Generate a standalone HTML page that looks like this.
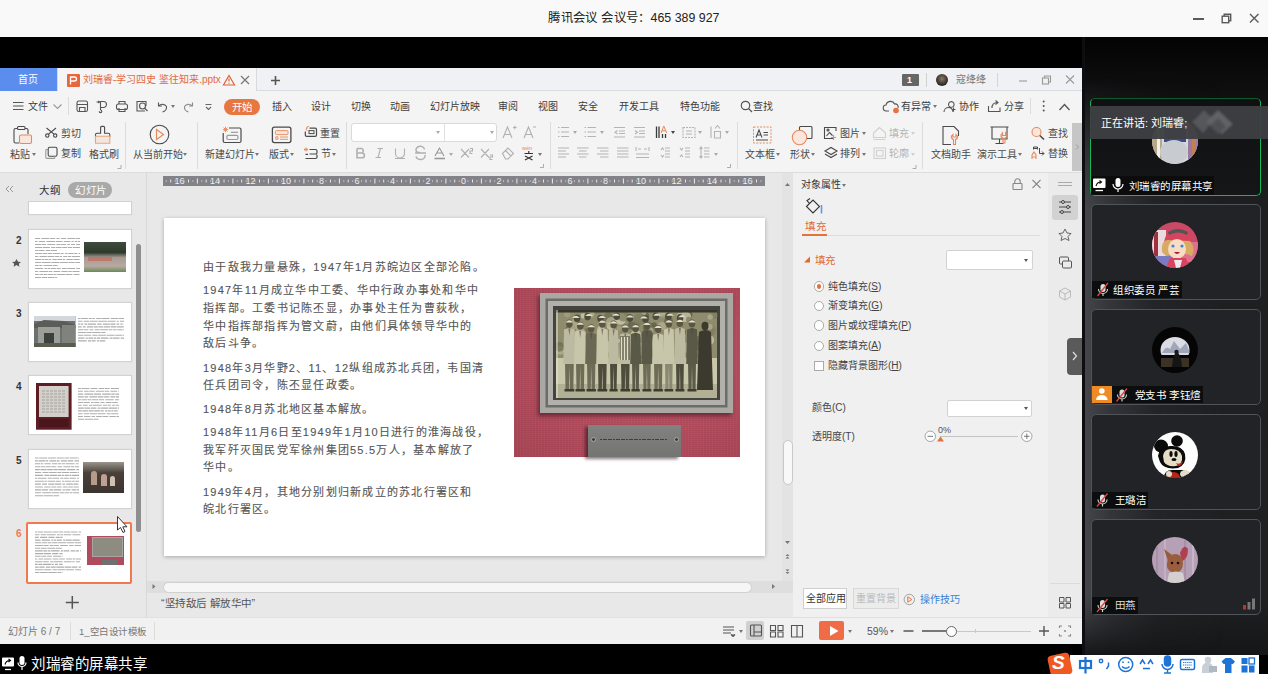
<!DOCTYPE html>
<html lang="zh-CN"><head><meta charset="utf-8">
<style>
*{margin:0;padding:0;box-sizing:border-box}
html,body{width:1268px;height:674px;overflow:hidden;background:#000;font-family:"Liberation Sans",sans-serif;position:relative}
.a{position:absolute}
.t{position:absolute;white-space:nowrap;line-height:1}
svg{position:absolute;overflow:visible}
.mn{font-size:10px;color:#3c3c3c;top:101.5px}
.rb{font-size:10px;color:#484848}
.dis{color:#b4b4b4}
.sep{position:absolute;width:1px;background:#dcdcdc}
.sl i{width:calc(1em + 1.25px);text-align:left}
.ar{position:absolute;width:0;height:0;border-left:2.5px solid transparent;border-right:2.5px solid transparent;border-top:3px solid #777}
i{font-style:normal;display:inline-block;width:1em;text-align:center}
.nf i{-webkit-text-stroke:.45px currentColor;font-size:1.25em;width:.8em;line-height:.8}
.nf .sl i{width:calc(.8em + 1.25px)}
</style></head><body>
<!-- title bar -->
<div class="a" style="left:0;top:0;width:1268px;height:37px;background:#f9f9f9"></div>
<div class="t" style="left:548px;top:12px;font-size:12.4px;color:#222"><i>腾</i><i>讯</i><i>会</i><i>议</i> <i>会</i><i>议</i><i>号</i><i>：</i>465 389 927</div>
<div class="a" style="left:1193px;top:18px;width:11px;height:1.5px;background:#5a5a5a"></div>
<svg style="left:0;top:0" width="1268" height="37"><g fill="none" stroke="#5a5a5a" stroke-width="1.4">
<rect x="1222.2" y="16.2" width="6.5" height="6.5"/><path d="M1224.2 16.2V14.2H1230.7V20.7H1228.7"/>
<path d="M1250 14L1258.5 22.5M1258.5 14L1250 22.5"/></g></svg>

<!-- video panel -->
<div class="a" style="left:1082px;top:37px;width:186px;height:618px;background:linear-gradient(#030303 0,#0c0c0d 40px,#151617 90px,#1e1f21 170px,#1f2022 560px,#151617 618px)"></div>
<div class="a" style="left:1085px;top:37px;width:183px;height:618px;background:linear-gradient(to right,rgba(80,83,88,.75) 0,rgba(70,72,77,.55) 25px,rgba(50,52,56,.25) 70px,rgba(30,31,33,0) 140px);-webkit-mask-image:linear-gradient(transparent 40px,#000 170px,#000 560px,transparent 618px)"></div>
<div class="a" style="left:1082px;top:37px;width:3px;height:618px;background:#0e0e10"></div>

<div class="a" style="left:1090px;top:98px;width:171px;height:98px;border:1.5px solid #18b457;border-top-color:#0d5a2a;border-radius:5px;background:linear-gradient(#0f1011,#151618)"></div>
<svg style="left:1152.3px;top:117.5px" width="46" height="46"><defs><clipPath id="c1"><circle cx="23" cy="23" r="23"/></clipPath></defs><g clip-path="url(#c1)"><rect width="46" height="46" fill="#d8d8dc"/><rect x="0" y="0" width="10" height="46" fill="#b8a888"/><rect x="36" y="0" width="10" height="46" fill="#9a7aa0"/><rect x="40" y="20" width="4" height="26" fill="#c08050"/><rect x="12" y="10" width="22" height="14" fill="#3a4a8a"/><ellipse cx="22" cy="34" rx="14" ry="12" fill="#c8ccd0"/><rect x="5" y="5" width="3" height="40" fill="#f0f0ea"/></g></svg>
<div class="a" style="left:1089.5px;top:105.7px;width:178.5px;height:33.3px;background:rgba(62,64,68,.96)"></div>
<div class="t" style="left:1101px;top:118px;font-size:11px;color:#fff"><i>正</i><i>在</i><i>讲</i><i>话</i>: <i>刘</i><i>瑞</i><i>睿</i>;</div>
<svg style="left:0;top:0" width="1" height="1"><g filter="blur(0.8px)"><path d="M1192 122L1204 110L1214 120L1203 133Z" fill="#55575b"/><path d="M1206 122L1218 110L1233 124L1222 134Z" fill="#606266"/><path d="M1210 126L1218 118L1226 127L1218 134Z" fill="#4e5054"/></g></svg>
<div class="a" style="left:1091px;top:176px;width:122.8px;height:18.6px;background:rgba(10,10,11,.8)"></div>
<svg style="left:0;top:0" width="1" height="1"><rect x="1093" y="178.5" width="12.5" height="9.5" rx="1" fill="#fff"/><path d="M1095.5 190.5H1103" stroke="#fff" stroke-width="1.3"/><path d="M1096 186Q1097 182 1101 182M1099.5 180.5L1101.5 182L1099.5 183.5" fill="none" stroke="#111" stroke-width="1.1"/>
<rect x="1115.5" y="178" width="5" height="9" rx="2.5" fill="#fff"/><path d="M1113 184A5 5 0 0 0 1123 184M1118 189V192" fill="none" stroke="#fff" stroke-width="1.2"/></svg>
<div class="t" style="left:1128.5px;top:180.5px;font-size:10.5px;color:#fff"><i>刘</i><i>瑞</i><i>睿</i><i>的</i><i>屏</i><i>幕</i><i>共</i><i>享</i></div>
<div class="a" style="left:1090.5px;top:203.5px;width:170px;height:96.5px;border:1px solid #505357;border-radius:5px;background:#222326"></div>
<svg style="left:1152.3px;top:222.0px" width="46" height="46"><defs><clipPath id="c2"><circle cx="23" cy="23" r="23"/></clipPath></defs><g clip-path="url(#c2)"><rect width="46" height="46" fill="#c84a66"/><rect x="0" y="8" width="14" height="26" fill="#e8dcdc"/><rect x="2" y="10" width="4" height="24" fill="#a03040"/><rect x="0" y="34" width="20" height="12" fill="#7a7ac0"/><rect x="30" y="20" width="16" height="20" fill="#e07090"/><path d="M12 20Q14 8 26 6Q40 6 40 18L38 20Z" fill="#d8445e"/><path d="M16 10Q26 4 36 10L35 13Q26 8 17 13Z" fill="#555"/><path d="M10 30Q9 18 16 18L38 19Q44 26 40 34L34 32L14 34Z" fill="#d8aa64"/><ellipse cx="25" cy="27" rx="9" ry="10" fill="#f8dcc4"/><circle cx="21" cy="24" r="1.6" fill="#3a8ad8"/><circle cx="30" cy="24" r="1.6" fill="#3a8ad8"/><path d="M22 30Q25 34 28 30Z" fill="#a02030"/><path d="M14 46L18 36H34L38 46Z" fill="#d8445e"/><path d="M22 38H30L28 46H24Z" fill="#f0e8f0"/></g></svg>
<div class="a" style="left:1091.5px;top:281px;width:90px;height:16.5px;background:rgba(8,8,9,.8)"></div><svg style="left:0;top:0" width="1" height="1"><rect x="1100.5" y="284" width="5" height="8" rx="2.5" fill="#ddd"/><path d="M1098.5 289A4.5 4.5 0 0 0 1107.5 289M1103.0 293.5V296" fill="none" stroke="#ddd" stroke-width="1.1"/><path d="M1108.0 283L1097.5 296" stroke="#e0443a" stroke-width="1.3"/></svg>
<div class="t" style="left:1113px;top:284.5px;font-size:10.5px;color:#fff"><i>组</i><i>织</i><i>委</i><i>员</i> <i>严</i><i>芸</i></div>
<div class="a" style="left:1090.5px;top:308.5px;width:170px;height:96px;border:1px solid #505357;border-radius:5px;background:#222326"></div>
<svg style="left:1152.3px;top:326.5px" width="46" height="46"><defs><clipPath id="c3"><circle cx="23" cy="23" r="23"/></clipPath></defs><g clip-path="url(#c3)"><rect width="46" height="46" fill="#050505"/><ellipse cx="23" cy="23" rx="14.5" ry="13" fill="#dcdde4"/><path d="M10 26Q14 18 18 22L22 14L28 22L34 16L38 26Z" fill="#8890a8" opacity=".7"/><rect x="8" y="28" width="30" height="18" fill="#050505"/><rect x="9" y="31" width="28" height="9" fill="#3a3224"/><path d="M20 40Q21 26 25 25Q29 27 30 40Z" fill="#151515"/><circle cx="24.5" cy="25" r="2.2" fill="#1a1a1a"/></g></svg>
<div class="a" style="left:1092px;top:386px;width:111px;height:16.6px;background:rgba(8,8,9,.8)"></div>
<div class="a" style="left:1092px;top:386px;width:19.6px;height:16.6px;background:#f08a24"></div>
<svg style="left:0;top:0" width="1" height="1"><circle cx="1101.8" cy="391" r="2.8" fill="#fff"/><path d="M1096 400A5.8 5 0 0 1 1107.6 400Z" fill="#fff"/></svg><svg style="left:0;top:0" width="1" height="1"><rect x="1119.5" y="389.5" width="5" height="8" rx="2.5" fill="#ddd"/><path d="M1117.5 394.5A4.5 4.5 0 0 0 1126.5 394.5M1122.0 399.0V401.5" fill="none" stroke="#ddd" stroke-width="1.1"/><path d="M1127.0 388.5L1116.5 401.5" stroke="#e0443a" stroke-width="1.3"/></svg>
<div class="t" style="left:1134.4px;top:390px;font-size:10.5px;color:#fff"><i>党</i><i>支</i><i>书</i> <i>李</i><i>钰</i><i>煊</i></div>
<div class="a" style="left:1090.5px;top:413.5px;width:170px;height:96px;border:1px solid #505357;border-radius:5px;background:#222326"></div>
<svg style="left:1152.3px;top:431.5px" width="46" height="46"><defs><clipPath id="c4"><circle cx="23" cy="23" r="23"/></clipPath></defs><g clip-path="url(#c4)"><rect width="46" height="46" fill="#fdfdfd"/><ellipse cx="9" cy="14" rx="7" ry="6.5" fill="#0a0a0a"/><circle cx="25" cy="9" r="5.8" fill="#0a0a0a"/><path d="M6 24Q8 14 18 14Q30 13 33 22Q35 32 26 36Q12 38 8 30Z" fill="#0a0a0a"/><path d="M11 24Q12 17 19 17Q28 17 30 24Q31 32 24 34Q15 35 12 30Z" fill="#e4dcc4"/><ellipse cx="19" cy="22" rx="1.6" ry="3" fill="#0a0a0a"/><ellipse cx="24" cy="22" rx="1.6" ry="3" fill="#0a0a0a"/><ellipse cx="22" cy="27.5" rx="2.5" ry="1.6" fill="#0a0a0a"/><path d="M24 31Q28 33 31 29Q30 34 26 34Z" fill="#c03028"/><path d="M12 46Q12 38 20 38H32Q37 40 37 46Z" fill="#0a0a0a"/><path d="M14 46Q15 40 22 40Q28 41 28 46Z" fill="#b82418"/><ellipse cx="33" cy="42" rx="5" ry="4" fill="#e4dcc4"/><ellipse cx="17" cy="42" rx="3" ry="3" fill="#e4dcc4"/></g></svg>
<div class="a" style="left:1092px;top:491.5px;width:56px;height:16.5px;background:rgba(8,8,9,.8)"></div><svg style="left:0;top:0" width="1" height="1"><rect x="1100" y="494.5" width="5" height="8" rx="2.5" fill="#ddd"/><path d="M1098 499.5A4.5 4.5 0 0 0 1107 499.5M1102.5 504.0V506.5" fill="none" stroke="#ddd" stroke-width="1.1"/><path d="M1107.5 493.5L1097 506.5" stroke="#e0443a" stroke-width="1.3"/></svg>
<div class="t" style="left:1114.4px;top:494.5px;font-size:10.5px;color:#fff"><i>王</i><i>璐</i><i>洁</i></div>
<div class="a" style="left:1090.5px;top:519px;width:170px;height:96px;border:1px solid #505357;border-radius:5px;background:#222326"></div>
<svg style="left:1152.3px;top:536.7px" width="46" height="46"><defs><clipPath id="c5"><circle cx="23" cy="23" r="23"/></clipPath></defs><g clip-path="url(#c5)"><rect width="46" height="46" fill="#b6a0b6"/><rect x="4" y="0" width="2" height="46" fill="#a890a8"/><rect x="12" y="0" width="2" height="46" fill="#c4b0c4"/><rect x="32" y="0" width="2" height="46" fill="#a890a8"/><rect x="40" y="0" width="2" height="46" fill="#c8b4c8"/><path d="M12 12L20 18L16 24Z" fill="#9a5a3a"/><path d="M28 16Q32 6 36 12Q36 22 30 24Z" fill="#b04050"/><path d="M15 26Q16 17 24 17Q31 18 31 26Q31 34 24 36Q16 35 15 30Z" fill="#9a5e3e"/><circle cx="20" cy="26" r="1.3" fill="#111"/><circle cx="26" cy="26" r="1.3" fill="#111"/><path d="M15 46L17 36Q24 33 31 36L33 46Z" fill="#d4d0d0"/></g></svg>
<div class="a" style="left:1092px;top:597px;width:46px;height:16.5px;background:rgba(8,8,9,.8)"></div><svg style="left:0;top:0" width="1" height="1"><rect x="1100" y="600" width="5" height="8" rx="2.5" fill="#ddd"/><path d="M1098 605A4.5 4.5 0 0 0 1107 605M1102.5 609.5V612" fill="none" stroke="#ddd" stroke-width="1.1"/><path d="M1107.5 599L1097 612" stroke="#e0443a" stroke-width="1.3"/></svg>
<div class="t" style="left:1114.4px;top:600px;font-size:10.5px;color:#ddd"><i>田</i><i>燕</i></div>
<svg style="left:0;top:0" width="1" height="1"><rect x="1243" y="605" width="3" height="4.5" fill="#c0322a"/><rect x="1247.5" y="602" width="3" height="7.5" fill="#777"/><rect x="1252" y="598.5" width="3" height="11" fill="#777"/></svg>
<!-- APP -->
<div class="a" style="left:0;top:68px;width:1082px;height:576px;background:#f4f4f4"></div>
<!-- tab bar -->
<div class="a" style="left:0;top:68px;width:1082px;height:23px;background:#eff1f4;border-bottom:1px solid #d9dce1"></div>
<div class="a" style="left:0;top:68px;width:57px;height:23px;background:#5b8def"></div>
<div class="t" style="left:18px;top:74.5px;font-size:10px;color:#fff"><i>首</i><i>页</i></div>
<div class="a" style="left:57px;top:68px;width:200px;height:23px;background:#f5f5f5;border-right:1px solid #d6d9de;border-left:1px solid #d6d9de"></div>
<div class="a" style="left:67px;top:74px;width:12.5px;height:12.5px;background:#e9653b;border-radius:1px"></div>
<svg style="left:0;top:0" width="1" height="1"><path d="M70.5 84.5V77H74.5A2 2 0 0 1 74.5 81H71" fill="none" stroke="#fff" stroke-width="1.3"/></svg>
<div class="t" style="left:83px;top:74.5px;font-size:10px;color:#e46a40"><i>刘</i><i>瑞</i><i>睿</i>-<i>学</i><i>习</i><i>四</i><i>史</i> <i>鉴</i><i>往</i><i>知</i><i>来</i>.pptx</div>
<svg style="left:0;top:0" width="1" height="1"><g fill="none" stroke-width="1.2"><path d="M229 75.5L234.5 85H223.5Z" stroke="#e0643a"/><path d="M229 78.5V81.5M229 82.7V83.7" stroke="#e0643a"/><path d="M241 76L249 84M249 76L241 84" stroke="#777"/><path d="M275.5 76V85M271 80.5H280" stroke="#555" stroke-width="1.6"/></g></svg>
<!-- right of tab bar -->
<div class="a" style="left:902px;top:74px;width:17px;height:12px;background:#666;border-radius:1px"></div>
<div class="t" style="left:907px;top:75.5px;font-size:9px;color:#fff;font-weight:bold">1</div>
<div class="a" style="left:926px;top:73px;width:1px;height:14px;background:#d0d0d0"></div>
<div class="a" style="left:936px;top:74px;width:12px;height:12px;border-radius:50%;background:radial-gradient(circle at 50% 40%,#8a7a6a,#2a2420 70%)"></div>
<div class="t" style="left:956px;top:75px;font-size:10px;color:#777"><i>寇</i><i>绛</i><i>绛</i></div>
<div class="a" style="left:997px;top:73px;width:1px;height:14px;background:#d6d6d6"></div>
<svg style="left:0;top:0" width="1" height="1"><g fill="none" stroke="#9a9a9a" stroke-width="1.1"><path d="M1019 81H1027"/><rect x="1042.5" y="78" width="6" height="6"/><path d="M1044.5 78V76H1050.5V82H1048.5"/><path d="M1066 75.5L1074 83.5M1074 75.5L1066 83.5"/></g></svg>

<!-- menu row -->
<svg style="left:0;top:0" width="1" height="1"><g fill="none" stroke="#555" stroke-width="1.1">
<path d="M13 102.5H23.5M13 106H23.5M13 109.5H23.5"/>
<path d="M53.5 104.5L57.5 108.5L61.5 104.5" stroke="#999"/>
</g></svg>
<div class="t mn" style="left:28px"><i>文</i><i>件</i></div>
<div class="sep" style="left:68px;top:97px;height:18px"></div>
<svg style="left:0;top:0" width="1" height="1"><g fill="none" stroke="#555" stroke-width="1.1">
<rect x="77" y="101" width="10.5" height="10.5" rx="1.8"/><path d="M77 104.5H87.5M79.5 111.5V107.5H85V111.5"/>
<path d="M96.5 102H99.5M98.3 100.8L99.5 102L98.3 103.2M100.5 110V101.5H103.5A3 3 0 0 1 103.5 107.5H100.5M100.5 110A1.3 1.3 0 1 1 99.2 111.3"/>
<rect x="116.5" y="104" width="11" height="5.5" rx="2"/><path d="M119 104V101.5H125V104M119 108V111.5H125V108"/>
<path d="M145 111H137V101.5H146V106"/><circle cx="142.5" cy="106" r="3"/><path d="M144.5 108L147.5 111"/>
<path d="M158.5 102.5V106H162M158.8 105.8A5 5 0 0 1 166.5 106.5A5 5 0 0 1 162.5 112"/>
<path d="M192.5 102.5V106H189M192.2 105.8A5 5 0 0 0 184.5 106.5A5 5 0 0 0 188.5 112" stroke="#8a8a8a"/>
<path d="M205.5 104.5H211.5M206 107L208.5 109.5L211 107" stroke="#666"/>
</g></svg>
<div class="ar" style="left:171px;top:105px"></div>
<div class="a" style="left:224px;top:98.5px;width:35.5px;height:16px;background:#e8763f;border-radius:8px"></div>
<div class="t" style="left:231.5px;top:101.5px;font-size:10.5px;color:#fff"><i>开</i><i>始</i></div>
<div class="t mn" style="left:271.5px"><i>插</i><i>入</i></div>
<div class="t mn" style="left:311px"><i>设</i><i>计</i></div>
<div class="t mn" style="left:351px"><i>切</i><i>换</i></div>
<div class="t mn" style="left:390px"><i>动</i><i>画</i></div>
<div class="t mn" style="left:430px"><i>幻</i><i>灯</i><i>片</i><i>放</i><i>映</i></div>
<div class="t mn" style="left:498px"><i>审</i><i>阅</i></div>
<div class="t mn" style="left:537.5px"><i>视</i><i>图</i></div>
<div class="t mn" style="left:577.5px"><i>安</i><i>全</i></div>
<div class="t mn" style="left:619px"><i>开</i><i>发</i><i>工</i><i>具</i></div>
<div class="t mn" style="left:680px"><i>特</i><i>色</i><i>功</i><i>能</i></div>
<svg style="left:0;top:0" width="1" height="1"><g fill="none" stroke="#555" stroke-width="1.2"><circle cx="745.5" cy="105.5" r="4.2"/><path d="M748.5 108.5L752 112"/></g></svg>
<div class="t mn" style="left:753px"><i>查</i><i>找</i></div>
<svg style="left:0;top:0" width="1" height="1"><g fill="none" stroke="#555" stroke-width="1.1">
<path d="M889 111H886.5A3 3 0 0 1 886 105A4.5 4.5 0 0 1 894.5 104A3 3 0 0 1 898 108"/>
<path d="M948.5 104.5A2.8 2.8 0 1 0 948.5 104.4M944 112A4.5 4.5 0 0 1 953 112M951.5 109.5H955.5M953.5 107.5V111.5"/>
<path d="M988.5 106V111.5H1000V107.5M992 108A5 5 0 0 1 997.5 102.5M995.5 100.5L998 102.5L995.5 104.5"/>
<path d="M1059.5 110L1064.5 104.5L1069.5 110" stroke-width="1.3"/>
</g><circle cx="896" cy="110.5" r="2.8" fill="#e9703f"/><g fill="#555"><circle cx="1043.7" cy="101.5" r="1"/><circle cx="1043.7" cy="106" r="1"/><circle cx="1043.7" cy="110.5" r="1"/></g></svg>
<div class="t mn" style="left:901px"><i>有</i><i>异</i><i>常</i></div><div class="ar" style="left:933px;top:105px"></div>
<div class="t mn" style="left:959px"><i>协</i><i>作</i></div>
<div class="t mn" style="left:1004px"><i>分</i><i>享</i></div>
<div class="sep" style="left:1030px;top:98px;height:16px"></div>

<!-- ribbon -->

<!-- ribbon: clipboard -->
<svg style="left:0;top:0" width="1" height="1"><g fill="none" stroke="#4a4a4a" stroke-width="1.1">
<path d="M17 128.5H15.5A1.5 1.5 0 0 0 14 130V141.5A1.5 1.5 0 0 0 15.5 143H19"/><path d="M25 128.5H26.5A1.5 1.5 0 0 1 28 130V134"/>
<rect x="17.5" y="126.5" width="7.5" height="3" rx="1"/>
<path d="M46.5 128L54 134.2M56 128L48.5 134.2"/><circle cx="47.3" cy="135.6" r="1.7"/><circle cx="55.2" cy="135.6" r="1.7"/>
<rect x="48.2" y="147.2" width="8.8" height="9" rx="1.5"/><path d="M48 149.5H46.5A1 1 0 0 0 45.8 150.5V157.5A1 1 0 0 0 46.8 158.4H53.8A1 1 0 0 0 54.8 157.4V156.3" stroke="#999"/>
</g>
<rect x="19.5" y="135" width="12" height="8.5" rx="1.5" fill="#fbe6dc" stroke="#e48a5e" stroke-width="1.1"/>
<g fill="none" stroke-width="1.1"><path d="M95.5 137V134.8A1.5 1.5 0 0 1 97 133.3H100.6V127.6A1.2 1.2 0 0 1 101.8 126.4H103.4A1.2 1.2 0 0 1 104.6 127.6V133.3H108.3A1.5 1.5 0 0 1 109.8 134.8V137" stroke="#4a4a4a"/><path d="M95.5 136.3H109.8V143.3H95.5Z" fill="#f3e6e0" stroke="#e9a47e"/></g>
<g fill="none" stroke="#4a4a4a" stroke-width="1.1"><circle cx="159.5" cy="134.5" r="9.3"/></g><path d="M156.5 129.5L163.5 134.5L156.5 139.5Z" fill="none" stroke="#e48a5e" stroke-width="1.2"/>
</svg>
<div class="t rb" style="left:10px;top:149.5px"><i>粘</i><i>贴</i></div><div class="ar" style="left:31.5px;top:153px"></div>
<div class="t rb" style="left:60.5px;top:128.5px"><i>剪</i><i>切</i></div>
<div class="t rb" style="left:60.5px;top:149px"><i>复</i><i>制</i></div>
<div class="t rb" style="left:88.5px;top:149.5px"><i>格</i><i>式</i><i>刷</i></div>
<div class="sep" style="left:124.5px;top:122px;height:47px"></div>
<div class="t rb" style="left:133px;top:149.5px"><i>从</i><i>当</i><i>前</i><i>开</i><i>始</i></div><div class="ar" style="left:183px;top:153px"></div>
<div class="sep" style="left:197px;top:122px;height:47px"></div>
<!-- slides group -->
<svg style="left:0;top:0" width="1" height="1"><g fill="none" stroke="#4a4a4a" stroke-width="1.2">
<path d="M229 128H239.5A1.5 1.5 0 0 1 241 129.5V141A1.5 1.5 0 0 1 239.5 142.5H224.7A1.5 1.5 0 0 1 223.2 141V133"/>
<rect x="226.8" y="135.4" width="11.2" height="4.1" rx="1.5" stroke="#9a9a9a"/><path d="M231 132.3H238" stroke="#9a9a9a"/>
<rect x="272.4" y="127.2" width="18.5" height="15.4" rx="2" stroke-width="1.3"/>
<path d="M305.3 131.5V135A1.4 1.4 0 0 0 306.7 136.4H315.1A1.4 1.4 0 0 0 316.5 135V129.6A1.4 1.4 0 0 0 315.1 128.2H309.5"/><rect x="309" y="130.6" width="5" height="3" stroke-width="1"/>
<path d="M309.5 149.5H315.5A1.5 1.5 0 0 1 317 151V152.5A1.5 1.5 0 0 1 315.5 154H309.5M313 154H315.5A1.5 1.5 0 0 1 317 155.5V157A1.5 1.5 0 0 1 315.5 158.5H305.5M305.5 154.3H308"/>
</g>
<g fill="none" stroke="#e8946a" stroke-width="1"><path d="M225.5 126.8V132.2M222.8 129.5H228.2M223.6 127.6L227.4 131.4M227.4 127.6L223.6 131.4"/>
<rect x="275.5" y="130.6" width="12.5" height="4" rx="1" fill="#f5e4da"/><path d="M275.8 136.8H278V139.3H275.8Z M280 137H288M280 139.3H288"/>
<path d="M308 127.5L306 129.2L307.5 131M306.3 129.2Q306 126.5 309 126.3"/>
<path d="M306 147.5V151.5M304 149.5H308M304.6 148.1L307.4 150.9M307.4 148.1L304.6 150.9"/></g>
</svg>
<div class="t rb" style="left:205px;top:149.5px"><i>新</i><i>建</i><i>幻</i><i>灯</i><i>片</i></div><div class="ar" style="left:254.5px;top:153px"></div>
<div class="t rb" style="left:269px;top:149.5px"><i>版</i><i>式</i></div><div class="ar" style="left:290px;top:153px"></div>
<div class="t rb" style="left:320px;top:128.5px"><i>重</i><i>置</i></div>
<div class="t rb" style="left:321px;top:149px"><i>节</i></div><div class="ar" style="left:332px;top:153px"></div>
<div class="sep" style="left:346px;top:122px;height:47px"></div>
<!-- font group -->
<div class="a" style="left:351px;top:123px;width:146px;height:18.5px;background:#fff;border:1px solid #dadada;border-radius:3px"></div>
<div class="a" style="left:443.5px;top:124px;width:1px;height:16.5px;background:#e0e0e0"></div>
<div class="ar" style="left:435.5px;top:131px;border-top-color:#aaa"></div>
<div class="ar" style="left:490px;top:131px;border-top-color:#aaa"></div>
<svg style="left:0;top:0" width="1" height="1"><g fill="none" stroke="#b0b0b0" stroke-width="1.1">
<path d="M503 138L507.5 127L512 138M504.5 134.5H510.5M513 127.5H516.5M514.8 125.7V129.3"/>
<path d="M524 138L528.5 127L533 138M525.5 134.5H531.5M533 127H536"/>
<path d="M357 148.5H361.5A2.3 2.3 0 0 1 361.5 153H357V148.5M357 153H362A2.4 2.4 0 0 1 362 157.8H357Z" stroke-width="1.6"/>
<path d="M380.5 148.5L378 157.5M377.5 148.5H383M375.5 157.5H381"/>
<path d="M395.5 148.5V153.5A4.5 4.5 0 0 0 404.5 153.5V148.5M395 158.5H405"/>
<path d="M424.5 149.5A3.5 3 0 0 0 416 150.5C416 152 418 152.5 420.5 153M415 153H426M425 155A3 2.5 0 0 1 416 156.5" stroke-width="1.5"/>
<path d="M435 156L439.5 148L444 156M436.5 153H442.5" stroke="#999"/><path d="M434.5 158.5H445" stroke="#999" stroke-width="1.6"/>
<path d="M461 149L469 157.5M469 149L461 157.5M470 148.5H472.5V151H470V153.5H472.5"/>
<path d="M481 149L489 157.5M489 149L481 157.5M490 155H492.5V157H490V159.5H492.5"/>
<path d="M502.5 153.5L508 148L513.5 153.5L508 159H505.5Z M505.5 150.5L511 156"/>
</g>
<path d="M524.5 153.5H533M528.8 151V153.5M525 156L532.5 160M532.5 156L525 160" stroke="#333" stroke-width="1.2" fill="none"/>
<text x="522" y="150" font-size="5.5" fill="#e48a5e" font-family="Liberation Sans">wén</text>
</svg>
<div class="ar" style="left:449px;top:153px;border-top-color:#aaa"></div>
<div class="ar" style="left:538px;top:153px"></div>
<div class="sep" style="left:550px;top:122px;height:47px"></div>
<!-- paragraph group -->
<svg style="left:0;top:0" width="1" height="1"><g fill="none" stroke="#b4b4b4" stroke-width="1.1">
<path d="M561 127.5H569M561 132H569M561 136.5H569M558 127.5H559.5M558 132H559.5M558 136.5H559.5"/>
<path d="M587.5 127.5H596M587.5 132H596M587.5 136.5H596M584.5 127.5H586M584.5 132H586M584.5 136.5H586"/>
<path d="M614 127.5H625M619 131H625M619 133.5H625M614 137H625M617.5 130.5L615 132.2L617.5 134"/>
<path d="M634 127.5H645M639 131H645M639 133.5H645M634 137H645M635 130.5L637.5 132.2L635 134"/>
<path d="M683 127.5H695V137.5H683Z" stroke-dasharray="2 1"/><path d="M686 131H692M686 134H692"/>
<path d="M711 126.5V138M714.5 131.5H720.5V138H714.5Z M715 128.5L717.5 125.5L720 128.5"/>
<path d="M558 148H569M558 151H566M558 154H569M558 157H566"/>
<path d="M577 148H588.5M579 151H586.5M577 154H588.5M579 157H586.5"/>
<path d="M597 148H608.5M600 151H608.5M597 154H608.5M600 157H608.5"/>
<path d="M617 148H628.5M617 151H628.5M617 154H628.5M617 157H628.5"/>
<path d="M636 147V151M649 147V151M638 149H641M644 149H647M636 154H649M636 157.5H649"/>
<path d="M665 148H670M665 151H670M665 154H670M665 157H670M661 150L662.5 148L664 150M661 155L662.5 157L664 155"/>
<path d="M685 148H690M685 151H690M685 154H690M685 157H690M680 148L681.5 150L683 148M680 157L681.5 155L683 157"/>
<path d="M704 148H709.5M704 151H709.5M704 154H709.5M704 157H709.5M701 147V158M699.5 149L701 147L702.5 149M699.5 156L701 158L702.5 156"/>
</g>
<g fill="none" stroke="#3a3a3a" stroke-width="1.3"><path d="M656.5 126.5V138M659 126.5V138M662.5 134V138M665.5 134V138"/></g>
<path d="M661 133L663.8 126L666.7 133M662 130.8H665.6" fill="none" stroke="#e48a5e" stroke-width="1"/>
</svg>
<div class="ar" style="left:573px;top:131px;border-top-color:#aaa"></div>
<div class="ar" style="left:600px;top:131px;border-top-color:#aaa"></div>
<div class="ar" style="left:671px;top:131px;border-top-color:#444"></div>
<div class="ar" style="left:698px;top:131px;border-top-color:#aaa"></div>
<div class="ar" style="left:724.5px;top:131px;border-top-color:#aaa"></div>
<div class="ar" style="left:713.5px;top:153px;border-top-color:#aaa"></div>
<div class="sep" style="left:737px;top:122px;height:47px"></div>
<!-- insert group -->
<svg style="left:0;top:0" width="1" height="1">
<rect x="753.5" y="127" width="17.5" height="16" fill="none" stroke="#e48a5e" stroke-width="1" stroke-dasharray="2 1.3"/>
<g fill="none" stroke="#4a4a4a" stroke-width="1.1">
<path d="M756 137.5L759 130L762 137.5M757 135H761M763.5 132.5H768M763.5 135H768M756 140H768"/>
<rect x="799.5" y="126.5" width="12.5" height="12" rx="1"/>
<path d="M836 131V127.5H824.5V138.5H833M826.5 136L829.5 132.5L832.5 135.5"/><circle cx="828" cy="130" r="1"/>
<path d="M825 151L831 147.5L837 151L831 154.5Z M825 154L831 157.5L837 154"/>
</g>
<circle cx="799.5" cy="137.5" r="7.2" fill="#fbe6dc" stroke="#e48a5e" stroke-width="1.1"/>
<path d="M833.5 135V140M831 137.5H836" stroke="#e48a5e" stroke-width="1.1"/>
<g fill="none" stroke="#d0d0d0" stroke-width="1.1"><path d="M873.5 137.5V133L879.5 127.5L885.5 133V137.5Z M873.5 139.5H885.5"/><rect x="874" y="148" width="11.5" height="10.5"/><rect x="876.5" y="150.5" width="6.5" height="5.5"/></g>
</svg>
<div class="t rb" style="left:744.5px;top:149.5px"><i>文</i><i>本</i><i>框</i></div><div class="ar" style="left:776px;top:153px"></div>
<div class="t rb" style="left:790px;top:149.5px"><i>形</i><i>状</i></div><div class="ar" style="left:811px;top:153px"></div>
<div class="t rb" style="left:840px;top:128.5px"><i>图</i><i>片</i></div><div class="ar" style="left:862px;top:132px"></div>
<div class="t rb" style="left:840px;top:149px"><i>排</i><i>列</i></div><div class="ar" style="left:862px;top:153px"></div>
<div class="t rb dis" style="left:889px;top:128.5px"><i>填</i><i>充</i></div><div class="ar" style="left:911px;top:132px;border-top-color:#d0d0d0"></div>
<div class="t rb dis" style="left:889px;top:149px"><i>轮</i><i>廓</i></div><div class="ar" style="left:911px;top:153px;border-top-color:#d0d0d0"></div>
<div class="sep" style="left:922px;top:122px;height:47px"></div>
<!-- tools group -->
<svg style="left:0;top:0" width="1" height="1"><g fill="none" stroke="#4a4a4a" stroke-width="1.1">
<path d="M951 144.5H943V126.5H954L958.5 131V136"/>
<path d="M990.5 127H1008.5M992 127V139H1007V127M999.5 139V143.5M995.5 143.5H1003.5"/>
<path d="M1033.5 149.5V147H1037.5V149.5M1034 148.5H1037M1039.5 148V153.5H1044M1042 151.5L1044 153.5L1042 155.5" stroke-width="1"/>
</g>
<g fill="none" stroke="#e48a5e" stroke-width="1.1">
<path d="M953.5 144.5V139.5A3 3 0 0 1 951.5 136L953 134.5V137H956V134.5L957.5 136A3 3 0 0 1 955.5 139.5V144.5Z"/>
<path d="M1003 143V138A2.6 2.6 0 0 1 1001 135L1002.5 133V135.5H1005.5V133L1007 135A2.6 2.6 0 0 1 1005 138V143Z"/>
<circle cx="1036.5" cy="132" r="4.5" fill="#fbe6dc"/><path d="M1039.8 135.5L1044 139.5" stroke="#4a4a4a" stroke-width="1.6"/>
<path d="M1032 159V155L1034 152L1036 155V159M1032.5 157H1035.5"/>
</g></svg>
<div class="t rb" style="left:931px;top:149.5px"><i>文</i><i>档</i><i>助</i><i>手</i></div>
<div class="t rb" style="left:977px;top:149.5px"><i>演</i><i>示</i><i>工</i><i>具</i></div><div class="ar" style="left:1018px;top:153px"></div>
<div class="t rb" style="left:1048px;top:128.5px"><i>查</i><i>找</i></div>
<div class="t rb" style="left:1048px;top:149px"><i>替</i><i>换</i></div>
<div class="a" style="left:1072px;top:122.5px;width:10px;height:48.5px;background:#c6c6c6"></div>
<svg style="left:0;top:0" width="1" height="1"><path d="M1076 144.5L1078.5 147L1076 149.5" fill="none" stroke="#999" stroke-width="0.9"/>
<g fill="none" stroke="#999" stroke-width="0.8"><path d="M117.5 168.5H121V165M540 167.5H543.5V164M727 167.5H730.5V164M912.5 168.5H916V165"/></g></svg>


<!-- workspace -->
<div class="a" style="left:0;top:172px;width:1082px;height:445px;background:#e8e8e8;border-top:1px solid #dcdcdc"></div>
<div class="a" style="left:146px;top:173px;width:1px;height:444px;background:#d8d8d8"></div>
<div class="a" style="left:782px;top:173px;width:11px;height:408px;background:#e3e3e3"></div>
<div class="a" style="left:793px;top:173px;width:255px;height:444px;background:#f0f0f0"></div>
<div class="a" style="left:1048px;top:173px;width:34px;height:444px;background:#ebebeb"></div>
<div class="a" style="left:147px;top:581px;width:646px;height:12px;background:#dedede"></div>

<!-- ws -->
<div class="a" style="left:163px;top:176px;width:602px;height:9.5px;background:#828288"></div>
<svg style="left:0;top:0" width="1" height="1"><path d="M166.3 180.5V181.7" stroke="#ddd" stroke-width="1"/><path d="M170.7 179.5V182.5" stroke="#e6e6e6" stroke-width="1"/><path d="M175.2 180.5V181.7" stroke="#ddd" stroke-width="1"/><text x="179.6" y="184.3" font-size="9" fill="#f0f0f0" text-anchor="middle" font-family="Liberation Sans">16</text><path d="M184.0 180.5V181.7" stroke="#ddd" stroke-width="1"/><path d="M188.5 179.5V182.5" stroke="#e6e6e6" stroke-width="1"/><path d="M192.9 180.5V181.7" stroke="#ddd" stroke-width="1"/><path d="M197.4 178.5V183.5" stroke="#eee" stroke-width="1"/><path d="M201.8 180.5V181.7" stroke="#ddd" stroke-width="1"/><path d="M206.2 179.5V182.5" stroke="#e6e6e6" stroke-width="1"/><path d="M210.7 180.5V181.7" stroke="#ddd" stroke-width="1"/><text x="215.1" y="184.3" font-size="9" fill="#f0f0f0" text-anchor="middle" font-family="Liberation Sans">14</text><path d="M219.5 180.5V181.7" stroke="#ddd" stroke-width="1"/><path d="M224.0 179.5V182.5" stroke="#e6e6e6" stroke-width="1"/><path d="M228.4 180.5V181.7" stroke="#ddd" stroke-width="1"/><path d="M232.9 178.5V183.5" stroke="#eee" stroke-width="1"/><path d="M237.3 180.5V181.7" stroke="#ddd" stroke-width="1"/><path d="M241.7 179.5V182.5" stroke="#e6e6e6" stroke-width="1"/><path d="M246.2 180.5V181.7" stroke="#ddd" stroke-width="1"/><text x="250.6" y="184.3" font-size="9" fill="#f0f0f0" text-anchor="middle" font-family="Liberation Sans">12</text><path d="M255.0 180.5V181.7" stroke="#ddd" stroke-width="1"/><path d="M259.5 179.5V182.5" stroke="#e6e6e6" stroke-width="1"/><path d="M263.9 180.5V181.7" stroke="#ddd" stroke-width="1"/><path d="M268.4 178.5V183.5" stroke="#eee" stroke-width="1"/><path d="M272.8 180.5V181.7" stroke="#ddd" stroke-width="1"/><path d="M277.2 179.5V182.5" stroke="#e6e6e6" stroke-width="1"/><path d="M281.7 180.5V181.7" stroke="#ddd" stroke-width="1"/><text x="286.1" y="184.3" font-size="9" fill="#f0f0f0" text-anchor="middle" font-family="Liberation Sans">10</text><path d="M290.5 180.5V181.7" stroke="#ddd" stroke-width="1"/><path d="M295.0 179.5V182.5" stroke="#e6e6e6" stroke-width="1"/><path d="M299.4 180.5V181.7" stroke="#ddd" stroke-width="1"/><path d="M303.9 178.5V183.5" stroke="#eee" stroke-width="1"/><path d="M308.3 180.5V181.7" stroke="#ddd" stroke-width="1"/><path d="M312.7 179.5V182.5" stroke="#e6e6e6" stroke-width="1"/><path d="M317.2 180.5V181.7" stroke="#ddd" stroke-width="1"/><text x="321.6" y="184.3" font-size="9" fill="#f0f0f0" text-anchor="middle" font-family="Liberation Sans">8</text><path d="M326.0 180.5V181.7" stroke="#ddd" stroke-width="1"/><path d="M330.5 179.5V182.5" stroke="#e6e6e6" stroke-width="1"/><path d="M334.9 180.5V181.7" stroke="#ddd" stroke-width="1"/><path d="M339.4 178.5V183.5" stroke="#eee" stroke-width="1"/><path d="M343.8 180.5V181.7" stroke="#ddd" stroke-width="1"/><path d="M348.2 179.5V182.5" stroke="#e6e6e6" stroke-width="1"/><path d="M352.7 180.5V181.7" stroke="#ddd" stroke-width="1"/><text x="357.1" y="184.3" font-size="9" fill="#f0f0f0" text-anchor="middle" font-family="Liberation Sans">6</text><path d="M361.5 180.5V181.7" stroke="#ddd" stroke-width="1"/><path d="M366.0 179.5V182.5" stroke="#e6e6e6" stroke-width="1"/><path d="M370.4 180.5V181.7" stroke="#ddd" stroke-width="1"/><path d="M374.9 178.5V183.5" stroke="#eee" stroke-width="1"/><path d="M379.3 180.5V181.7" stroke="#ddd" stroke-width="1"/><path d="M383.7 179.5V182.5" stroke="#e6e6e6" stroke-width="1"/><path d="M388.2 180.5V181.7" stroke="#ddd" stroke-width="1"/><text x="392.6" y="184.3" font-size="9" fill="#f0f0f0" text-anchor="middle" font-family="Liberation Sans">4</text><path d="M397.0 180.5V181.7" stroke="#ddd" stroke-width="1"/><path d="M401.5 179.5V182.5" stroke="#e6e6e6" stroke-width="1"/><path d="M405.9 180.5V181.7" stroke="#ddd" stroke-width="1"/><path d="M410.4 178.5V183.5" stroke="#eee" stroke-width="1"/><path d="M414.8 180.5V181.7" stroke="#ddd" stroke-width="1"/><path d="M419.2 179.5V182.5" stroke="#e6e6e6" stroke-width="1"/><path d="M423.7 180.5V181.7" stroke="#ddd" stroke-width="1"/><text x="428.1" y="184.3" font-size="9" fill="#f0f0f0" text-anchor="middle" font-family="Liberation Sans">2</text><path d="M432.5 180.5V181.7" stroke="#ddd" stroke-width="1"/><path d="M437.0 179.5V182.5" stroke="#e6e6e6" stroke-width="1"/><path d="M441.4 180.5V181.7" stroke="#ddd" stroke-width="1"/><path d="M445.9 178.5V183.5" stroke="#eee" stroke-width="1"/><path d="M450.3 180.5V181.7" stroke="#ddd" stroke-width="1"/><path d="M454.7 179.5V182.5" stroke="#e6e6e6" stroke-width="1"/><path d="M459.2 180.5V181.7" stroke="#ddd" stroke-width="1"/><text x="463.6" y="184.3" font-size="9" fill="#f0f0f0" text-anchor="middle" font-family="Liberation Sans">0</text><path d="M468.0 180.5V181.7" stroke="#ddd" stroke-width="1"/><path d="M472.5 179.5V182.5" stroke="#e6e6e6" stroke-width="1"/><path d="M476.9 180.5V181.7" stroke="#ddd" stroke-width="1"/><path d="M481.4 178.5V183.5" stroke="#eee" stroke-width="1"/><path d="M485.8 180.5V181.7" stroke="#ddd" stroke-width="1"/><path d="M490.2 179.5V182.5" stroke="#e6e6e6" stroke-width="1"/><path d="M494.7 180.5V181.7" stroke="#ddd" stroke-width="1"/><text x="499.1" y="184.3" font-size="9" fill="#f0f0f0" text-anchor="middle" font-family="Liberation Sans">2</text><path d="M503.5 180.5V181.7" stroke="#ddd" stroke-width="1"/><path d="M508.0 179.5V182.5" stroke="#e6e6e6" stroke-width="1"/><path d="M512.4 180.5V181.7" stroke="#ddd" stroke-width="1"/><path d="M516.9 178.5V183.5" stroke="#eee" stroke-width="1"/><path d="M521.3 180.5V181.7" stroke="#ddd" stroke-width="1"/><path d="M525.7 179.5V182.5" stroke="#e6e6e6" stroke-width="1"/><path d="M530.2 180.5V181.7" stroke="#ddd" stroke-width="1"/><text x="534.6" y="184.3" font-size="9" fill="#f0f0f0" text-anchor="middle" font-family="Liberation Sans">4</text><path d="M539.0 180.5V181.7" stroke="#ddd" stroke-width="1"/><path d="M543.5 179.5V182.5" stroke="#e6e6e6" stroke-width="1"/><path d="M547.9 180.5V181.7" stroke="#ddd" stroke-width="1"/><path d="M552.4 178.5V183.5" stroke="#eee" stroke-width="1"/><path d="M556.8 180.5V181.7" stroke="#ddd" stroke-width="1"/><path d="M561.2 179.5V182.5" stroke="#e6e6e6" stroke-width="1"/><path d="M565.7 180.5V181.7" stroke="#ddd" stroke-width="1"/><text x="570.1" y="184.3" font-size="9" fill="#f0f0f0" text-anchor="middle" font-family="Liberation Sans">6</text><path d="M574.5 180.5V181.7" stroke="#ddd" stroke-width="1"/><path d="M579.0 179.5V182.5" stroke="#e6e6e6" stroke-width="1"/><path d="M583.4 180.5V181.7" stroke="#ddd" stroke-width="1"/><path d="M587.9 178.5V183.5" stroke="#eee" stroke-width="1"/><path d="M592.3 180.5V181.7" stroke="#ddd" stroke-width="1"/><path d="M596.7 179.5V182.5" stroke="#e6e6e6" stroke-width="1"/><path d="M601.2 180.5V181.7" stroke="#ddd" stroke-width="1"/><text x="605.6" y="184.3" font-size="9" fill="#f0f0f0" text-anchor="middle" font-family="Liberation Sans">8</text><path d="M610.0 180.5V181.7" stroke="#ddd" stroke-width="1"/><path d="M614.5 179.5V182.5" stroke="#e6e6e6" stroke-width="1"/><path d="M618.9 180.5V181.7" stroke="#ddd" stroke-width="1"/><path d="M623.4 178.5V183.5" stroke="#eee" stroke-width="1"/><path d="M627.8 180.5V181.7" stroke="#ddd" stroke-width="1"/><path d="M632.2 179.5V182.5" stroke="#e6e6e6" stroke-width="1"/><path d="M636.7 180.5V181.7" stroke="#ddd" stroke-width="1"/><text x="641.1" y="184.3" font-size="9" fill="#f0f0f0" text-anchor="middle" font-family="Liberation Sans">10</text><path d="M645.5 180.5V181.7" stroke="#ddd" stroke-width="1"/><path d="M650.0 179.5V182.5" stroke="#e6e6e6" stroke-width="1"/><path d="M654.4 180.5V181.7" stroke="#ddd" stroke-width="1"/><path d="M658.9 178.5V183.5" stroke="#eee" stroke-width="1"/><path d="M663.3 180.5V181.7" stroke="#ddd" stroke-width="1"/><path d="M667.7 179.5V182.5" stroke="#e6e6e6" stroke-width="1"/><path d="M672.2 180.5V181.7" stroke="#ddd" stroke-width="1"/><text x="676.6" y="184.3" font-size="9" fill="#f0f0f0" text-anchor="middle" font-family="Liberation Sans">12</text><path d="M681.0 180.5V181.7" stroke="#ddd" stroke-width="1"/><path d="M685.5 179.5V182.5" stroke="#e6e6e6" stroke-width="1"/><path d="M689.9 180.5V181.7" stroke="#ddd" stroke-width="1"/><path d="M694.4 178.5V183.5" stroke="#eee" stroke-width="1"/><path d="M698.8 180.5V181.7" stroke="#ddd" stroke-width="1"/><path d="M703.2 179.5V182.5" stroke="#e6e6e6" stroke-width="1"/><path d="M707.7 180.5V181.7" stroke="#ddd" stroke-width="1"/><text x="712.1" y="184.3" font-size="9" fill="#f0f0f0" text-anchor="middle" font-family="Liberation Sans">14</text><path d="M716.5 180.5V181.7" stroke="#ddd" stroke-width="1"/><path d="M721.0 179.5V182.5" stroke="#e6e6e6" stroke-width="1"/><path d="M725.4 180.5V181.7" stroke="#ddd" stroke-width="1"/><path d="M729.9 178.5V183.5" stroke="#eee" stroke-width="1"/><path d="M734.3 180.5V181.7" stroke="#ddd" stroke-width="1"/><path d="M738.7 179.5V182.5" stroke="#e6e6e6" stroke-width="1"/><path d="M743.2 180.5V181.7" stroke="#ddd" stroke-width="1"/><text x="747.6" y="184.3" font-size="9" fill="#f0f0f0" text-anchor="middle" font-family="Liberation Sans">16</text><path d="M752.0 180.5V181.7" stroke="#ddd" stroke-width="1"/><path d="M756.5 179.5V182.5" stroke="#e6e6e6" stroke-width="1"/><path d="M760.9 180.5V181.7" stroke="#ddd" stroke-width="1"/></svg>
<div class="a" style="left:27.5px;top:201px;width:104px;height:14.1px;border-top:none;background:#fff;border:1px solid #d2d2d2;box-shadow:0 0 1px #ccc"></div><div class="a" style="left:27.5px;top:228.5px;width:104px;height:60px;background:#fff;border:1px solid #d2d2d2;box-shadow:0 0 1px #ccc"></div><div class="t" style="left:16px;top:235.5px;font-size:10px;font-weight:bold;color:#333">2</div><div class="a" style="left:27.5px;top:301.9px;width:104px;height:60px;background:#fff;border:1px solid #d2d2d2;box-shadow:0 0 1px #ccc"></div><div class="t" style="left:16px;top:308.9px;font-size:10px;font-weight:bold;color:#333">3</div><div class="a" style="left:27.5px;top:375.3px;width:104px;height:60px;background:#fff;border:1px solid #d2d2d2;box-shadow:0 0 1px #ccc"></div><div class="t" style="left:16px;top:382.3px;font-size:10px;font-weight:bold;color:#333">4</div><div class="a" style="left:27.5px;top:448.7px;width:104px;height:60px;background:#fff;border:1px solid #d2d2d2;box-shadow:0 0 1px #ccc"></div><div class="t" style="left:16px;top:455.7px;font-size:10px;font-weight:bold;color:#333">5</div><div class="a" style="left:26px;top:522.1px;width:106px;height:61.5px;background:#fff;border:2px solid #f0794f;border-radius:2px"></div><div class="t" style="left:16px;top:529.1px;font-size:10px;font-weight:bold;color:#f07a50">6</div><svg style="left:0;top:0" width="1" height="1"><g stroke="#a4a4a4" stroke-width="1.1" stroke-opacity=".9" fill="none"><path d="M35.0 238.5H80.0" stroke-dasharray="5.2 1.2 8.0 0.6 5.2 1.2 3.3 1.2 5.3 1.2 7.6 0.6 5.1 0.6"/><path d="M35.0 241.5H80.0" stroke-dasharray="2.6 1.2 6.4 1.2 8.9 0.6 6.6 1.2 6.6 1.2 2.1 1.2 2.4 0.6 3.3 0.6"/><path d="M35.0 244.5H80.0" stroke-dasharray="6.2 0.6 4.3 1.2 7.9 1.2 3.6 0.6 5.5 1.2 2.6 1.2 3.9 1.2 9.0 0.6"/><path d="M35.0 247.5H80.0" stroke-dasharray="7.0 0.6 7.3 1.2 4.0 0.6 5.9 0.6 4.8 0.6 4.7 0.6 7.9 0.6"/><path d="M35.0 250.5H57.5" stroke-dasharray="3.5 0.6 5.3 1.2 4.8 0.6 6.0 0.6"/><path d="M35.0 253.5H80.0" stroke-dasharray="7.4 0.6 4.4 0.6 4.3 0.6 7.3 0.6 2.9 1.2 2.7 0.6 5.3 0.6 3.2 1.2 3.3 1.2"/><path d="M35.0 256.5H80.0" stroke-dasharray="3.3 1.2 7.4 0.6 6.5 0.6 4.8 0.6 2.0 1.2 4.1 0.6 3.5 0.6 9.0 1.2"/><path d="M35.0 259.5H80.0" stroke-dasharray="6.5 0.6 2.3 0.6 3.5 0.6 2.1 1.2 4.3 0.6 4.7 0.6 2.6 1.2 6.5 0.6 6.2 0.6"/><path d="M35.0 262.5H80.0" stroke-dasharray="6.4 0.6 8.7 0.6 7.8 0.6 8.1 0.6 6.4 0.6 8.4 1.2"/><path d="M35.0 265.5H57.5" stroke-dasharray="3.7 0.6 3.1 1.2 8.6 0.6 6.8 0.6"/><path d="M35.0 268.5H80.0" stroke-dasharray="8.2 1.2 2.5 0.6 2.7 0.6 5.6 0.6 3.7 1.2 4.7 0.6 7.8 1.2 5.4 1.2"/><path d="M35.0 271.5H80.0" stroke-dasharray="3.2 1.2 8.8 0.6 3.6 1.2 6.6 1.2 6.3 0.6 3.5 0.6 7.2 0.6"/><path d="M35.0 274.5H80.0" stroke-dasharray="3.9 0.6 3.7 0.6 3.2 0.6 5.7 0.6 2.6 0.6 8.2 0.6 6.6 1.2 5.7 0.6"/><path d="M35.0 277.5H57.5" stroke-dasharray="6.1 0.6 5.3 0.6 6.9 0.6 2.1 1.2"/><path d="M78.0 318.5H124.0" stroke-dasharray="2.5 0.6 7.1 0.6 3.0 0.6 2.5 1.2 4.6 0.6 8.3 1.2 7.2 0.6 7.6 0.6"/><path d="M78.0 321.3H124.0" stroke-dasharray="4.5 1.2 5.3 0.6 8.1 0.6 8.6 0.6 8.0 1.2 2.1 1.2 4.7 1.2"/><path d="M78.0 324.1H124.0" stroke-dasharray="2.1 0.6 2.6 1.2 2.8 0.6 8.2 1.2 4.3 1.2 6.9 0.6 5.1 1.2 2.6 1.2 2.2 1.2 2.6 0.6"/><path d="M78.0 326.9H124.0" stroke-dasharray="3.6 1.2 2.8 1.2 6.6 0.6 3.8 0.6 4.6 0.6 6.7 0.6 5.6 0.6 6.6 0.6"/><path d="M78.0 329.7H124.0" stroke-dasharray="5.5 0.6 4.3 1.2 3.8 1.2 5.0 0.6 8.2 0.6 3.5 0.6 3.5 0.6 5.5 0.6 7.0 0.6"/><path d="M78.0 332.5H105.6" stroke-dasharray="7.8 0.6 5.2 0.6 8.5 0.6 4.7 1.2"/><path d="M78.0 335.3H124.0" stroke-dasharray="5.5 0.6 7.0 1.2 5.2 0.6 7.8 0.6 8.1 0.6 6.7 0.6 6.0 0.6"/><path d="M78.0 338.1H124.0" stroke-dasharray="6.5 1.2 2.1 0.6 4.8 0.6 2.2 0.6 3.7 0.6 7.6 1.2 2.8 0.6 6.4 1.2 6.5 0.6"/><path d="M78.0 340.9H105.6" stroke-dasharray="8.7 1.2 3.4 0.6 3.8 1.2 2.1 0.6 5.7 0.6"/><path d="M78.0 388.5H119.0" stroke-dasharray="3.3 0.6 7.5 1.2 6.9 1.2 5.5 0.6 4.8 1.2 8.3 0.6"/><path d="M78.0 391.3H119.0" stroke-dasharray="4.9 1.2 4.7 0.6 5.2 1.2 8.2 0.6 4.6 1.2 6.6 1.2 7.6 0.6"/><path d="M78.0 394.1H119.0" stroke-dasharray="5.2 1.2 8.9 0.6 7.1 1.2 8.5 0.6 3.5 0.6 8.9 0.6"/><path d="M78.0 396.9H119.0" stroke-dasharray="5.8 0.6 3.8 1.2 8.0 0.6 5.5 0.6 5.1 1.2 4.9 0.6 5.4 0.6"/><path d="M78.0 399.7H119.0" stroke-dasharray="3.5 0.6 5.0 0.6 3.2 0.6 6.8 0.6 5.3 1.2 8.3 1.2 7.9 1.2"/><path d="M78.0 402.5H119.0" stroke-dasharray="5.1 0.6 6.1 1.2 2.6 0.6 5.1 1.2 4.0 1.2 5.9 0.6 5.7 1.2"/><path d="M78.0 405.3H119.0" stroke-dasharray="3.8 1.2 4.7 1.2 3.5 0.6 8.8 1.2 3.9 0.6 3.4 1.2 2.8 0.6 6.2 0.6"/><path d="M78.0 408.1H119.0" stroke-dasharray="5.8 0.6 5.6 0.6 5.8 1.2 2.9 0.6 6.8 0.6 8.5 0.6 4.9 0.6"/><path d="M78.0 410.9H119.0" stroke-dasharray="3.9 0.6 5.5 0.6 5.0 0.6 5.7 0.6 3.3 1.2 2.2 0.6 2.9 0.6 2.2 0.6 3.6 1.2 4.0 1.2"/><path d="M78.0 413.7H119.0" stroke-dasharray="4.5 1.2 5.5 0.6 7.1 0.6 8.0 1.2 3.8 0.6 6.9 0.6 2.2 1.2"/><path d="M78.0 416.5H119.0" stroke-dasharray="4.9 1.2 6.3 1.2 3.4 1.2 5.7 0.6 5.7 1.2 6.3 0.6 3.6 1.2"/><path d="M78.0 419.3H98.5" stroke-dasharray="6.4 0.6 8.3 0.6 6.2 0.6"/><path d="M35.0 458.0H79.0" stroke-dasharray="3.5 0.6 8.2 0.6 8.2 0.6 7.1 0.6 4.7 0.6 7.8 0.6 5.8 1.2"/><path d="M35.0 460.9H79.0" stroke-dasharray="2.9 0.6 6.4 0.6 2.7 1.2 6.8 0.6 2.8 1.2 6.4 0.6 5.5 1.2 7.8 0.6"/><path d="M35.0 463.8H79.0" stroke-dasharray="5.4 0.6 2.3 1.2 6.3 1.2 5.4 0.6 3.3 0.6 3.2 0.6 8.9 1.2 2.7 0.6 2.9 1.2"/><path d="M35.0 466.7H79.0" stroke-dasharray="5.2 0.6 4.3 0.6 5.0 0.6 5.0 1.2 4.6 1.2 6.9 0.6 3.3 0.6 4.5 0.6"/><path d="M35.0 469.6H79.0" stroke-dasharray="4.8 0.6 6.2 0.6 5.6 0.6 4.3 0.6 7.6 1.2 8.1 1.2 8.6 1.2"/><path d="M35.0 472.5H79.0" stroke-dasharray="6.2 1.2 6.1 0.6 7.6 0.6 4.0 0.6 7.2 0.6 7.7 0.6 2.9 0.6"/><path d="M35.0 475.4H79.0" stroke-dasharray="8.2 1.2 4.6 0.6 7.4 0.6 3.4 0.6 2.5 0.6 4.1 0.6 2.1 0.6 8.9 1.2"/><path d="M35.0 478.3H79.0" stroke-dasharray="2.3 0.6 8.6 1.2 4.1 0.6 6.6 1.2 3.3 0.6 4.7 0.6 6.5 1.2 2.8 0.6"/><path d="M35.0 481.2H79.0" stroke-dasharray="8.9 0.6 2.8 0.6 7.2 0.6 5.1 1.2 2.4 0.6 6.5 0.6 2.7 0.6 3.9 0.6"/><path d="M35.0 484.1H79.0" stroke-dasharray="5.9 1.2 4.9 1.2 6.0 0.6 6.5 1.2 2.5 1.2 6.7 0.6 4.7 0.6 4.7 0.6"/><path d="M35.0 487.0H79.0" stroke-dasharray="8.0 1.2 6.3 0.6 5.0 0.6 4.9 1.2 4.8 0.6 4.6 0.6 5.4 0.6"/><path d="M35.0 489.9H79.0" stroke-dasharray="5.9 0.6 6.6 1.2 4.1 0.6 7.4 1.2 2.3 0.6 4.9 1.2 4.7 0.6 7.2 0.6"/><path d="M35.0 492.8H79.0" stroke-dasharray="6.1 1.2 8.6 0.6 7.6 0.6 5.0 0.6 3.8 0.6 2.3 0.6 8.6 1.2"/><path d="M35.0 495.7H59.2" stroke-dasharray="8.4 0.6 8.9 0.6 6.2 0.6"/><path d="M35.0 532.0H81.0" stroke-dasharray="2.4 0.6 5.2 0.6 8.0 0.6 5.7 0.6 4.5 0.6 6.7 0.6 6.2 1.2 6.1 0.6"/><path d="M35.0 534.7H81.0" stroke-dasharray="4.5 1.2 5.7 0.6 8.7 1.2 2.9 0.6 2.8 0.6 7.5 1.2 7.9 0.6"/><path d="M35.0 537.4H62.6" stroke-dasharray="3.9 1.2 7.1 1.2 6.1 1.2 4.0 0.6 3.3 0.6"/><path d="M35.0 540.1H81.0" stroke-dasharray="5.5 1.2 8.4 1.2 2.3 0.6 2.1 0.6 5.0 1.2 2.3 0.6 5.8 0.6 7.3 1.2 3.1 0.6"/><path d="M35.0 542.8H81.0" stroke-dasharray="6.4 0.6 5.4 0.6 3.5 0.6 5.5 0.6 7.9 0.6 7.6 0.6 7.7 1.2"/><path d="M35.0 545.5H81.0" stroke-dasharray="7.9 0.6 5.1 1.2 3.8 0.6 4.6 1.2 7.9 1.2 4.3 1.2 7.3 0.6"/><path d="M35.0 548.2H62.6" stroke-dasharray="5.0 0.6 6.1 0.6 8.1 0.6 5.8 0.6 5.9 0.6"/><path d="M35.0 550.9H81.0" stroke-dasharray="7.7 0.6 4.1 0.6 2.5 0.6 8.4 1.2 2.6 0.6 5.5 1.2 4.3 0.6 3.5 1.2 7.1 0.6"/><path d="M35.0 553.6H62.6" stroke-dasharray="8.3 0.6 7.0 1.2 6.2 1.2 8.4 0.6"/><path d="M35.0 556.3H62.6" stroke-dasharray="5.7 0.6 5.2 0.6 4.8 1.2 8.3 0.6 2.6 0.6"/><path d="M35.0 559.0H81.0" stroke-dasharray="2.2 1.2 4.8 0.6 7.6 1.2 5.9 0.6 5.8 1.2 5.9 0.6 2.6 0.6 8.2 0.6"/><path d="M35.0 561.7H81.0" stroke-dasharray="7.7 0.6 5.6 1.2 3.1 0.6 8.8 1.2 7.9 0.6 2.4 1.2 4.1 1.2"/><path d="M35.0 564.4H62.6" stroke-dasharray="2.6 0.6 3.9 0.6 8.3 0.6 2.2 1.2 3.0 1.2 7.7 0.6"/><path d="M35.0 567.1H81.0" stroke-dasharray="3.7 0.6 5.4 1.2 4.4 0.6 4.8 0.6 7.7 0.6 6.7 0.6 5.4 1.2 2.5 1.2"/><path d="M35.0 569.8H81.0" stroke-dasharray="8.4 0.6 7.3 1.2 4.4 0.6 7.6 0.6 8.2 1.2 6.5 1.2"/><path d="M35.0 572.5H62.6" stroke-dasharray="4.5 0.6 7.6 0.6 8.5 0.6 3.7 0.6 8.9 0.6"/></g></svg><div class="a" style="left:83.5px;top:242px;width:42.5px;height:29.5px;background:linear-gradient(#3e4a3c 0%,#2e3a2c 35%,#a89a92 52%,#b8aaa2 80%,#6a8a58 100%)"></div><div class="a" style="left:88px;top:257px;width:24px;height:4px;background:#c06a5a;opacity:.7"></div><svg style="left:34px;top:316px" width="41.5" height="31"><rect width="41.5" height="31" fill="#6e706c"/><rect width="41.5" height="5" fill="#d4d8dc"/><path d="M0 8L10 4L30 5L41.5 9V12H0Z" fill="#5a5c58"/><rect x="4" y="11" width="22" height="20" fill="#9c9e9a"/><rect x="10" y="17" width="10" height="14" fill="#3e403c"/><rect x="28" y="9" width="13.5" height="22" fill="#80827e"/><rect x="0" y="27" width="41.5" height="4" fill="#5a5c50"/></svg><svg style="left:36px;top:382.7px" width="35.6" height="46.7"><rect width="35.6" height="46.7" fill="#5c1e24"/><rect x="3" y="3" width="29.6" height="31" fill="#d2d0ca"/><g stroke="#9a9892" stroke-width="0.8"><path d="M6 8H30M6 11H30M6 14H30M6 17H30M6 20H30M6 23H30M6 26H30M6 29H30" stroke-dasharray="3 1"/></g><rect x="3" y="36" width="29.6" height="8" fill="#4a161c"/></svg><div class="a" style="left:83.2px;top:462px;width:40.6px;height:31.2px;background:linear-gradient(#9a948a 0%,#4a403a 35%,#3c3430 100%)"></div><div class="a" style="left:91px;top:471px;width:6px;height:14px;background:#b89a88;border-radius:3px 3px 0 0"></div><div class="a" style="left:101px;top:474px;width:6px;height:12px;background:#c0a090;border-radius:3px 3px 0 0"></div><div class="a" style="left:110px;top:476px;width:5px;height:10px;background:#d0c0b0;border-radius:3px 3px 0 0"></div><div class="a" style="left:87px;top:536px;width:37.3px;height:29.2px;background:#b04a5c"></div><div class="a" style="left:91.5px;top:537px;width:31px;height:20px;background:#8e8c80;border:1.5px solid #a6a6a6"></div><div class="a" style="left:102px;top:560px;width:15px;height:4.5px;background:#707070"></div><div class="a" style="left:0;top:173px;width:146px;height:28px;background:#e8e8e8"></div>
<svg style="left:0;top:0" width="1" height="1"><path d="M9 186L6 189L9 192M13 186L10 189L13 192" fill="none" stroke="#999" stroke-width="1"/></svg>
<div class="t" style="left:39px;top:184.5px;font-size:10.5px;color:#333"><i>大</i><i>纲</i></div>
<div class="a" style="left:68.4px;top:182.4px;width:43.6px;height:15.2px;background:#a9a9a9;border-radius:8px"></div>
<div class="t" style="left:75px;top:184.5px;font-size:10.5px;color:#fff"><i>幻</i><i>灯</i><i>片</i></div>
<div class="a" style="left:136.3px;top:243.7px;width:5.2px;height:288.5px;background:#8f8f8f;border-radius:3px"></div>
<svg style="left:0;top:0" width="1" height="1"><path d="M16.5 259L18 261.7L21 262L18.8 263.8L19.4 266.7L16.5 265.1L13.6 266.7L14.2 263.8L12 262L15 261.7Z" fill="#555"/>
<path d="M72.3 596V608.8M65.8 602.4H78.8" stroke="#555" stroke-width="1.5"/>
<path d="M117.5 516.5V530L120.5 527.5L123 532.5L125 531.5L122.8 526.8H127Z" fill="#fff" stroke="#222" stroke-width="0.9"/></svg>


<div class="a" style="left:164px;top:218px;width:601px;height:338px;background:#fff;box-shadow:0 1px 4px rgba(0,0,0,.28)"></div>
<div class="a sl" style="left:203px;top:259px;width:290px;font-size:11px;line-height:17.6px;color:#555;letter-spacing:1.25px;white-space:nowrap;-webkit-text-stroke:0.12px #555">
<div style="position:absolute;top:0"><i>由</i><i>于</i><i>敌</i><i>我</i><i>力</i><i>量</i><i>悬</i><i>殊</i><i>，</i>1947<i>年</i>1<i>月</i><i>苏</i><i>皖</i><i>边</i><i>区</i><i>全</i><i>部</i><i>沦</i><i>陷</i><i>。</i></div>
<div style="position:absolute;top:23.4px">1947<i>年</i>11<i>月</i><i>成</i><i>立</i><i>华</i><i>中</i><i>工</i><i>委</i><i>、</i><i>华</i><i>中</i><i>行</i><i>政</i><i>办</i><i>事</i><i>处</i><i>和</i><i>华</i><i>中</i><br><i>指</i><i>挥</i><i>部</i><i>。</i><i>工</i><i>委</i><i>书</i><i>记</i><i>陈</i><i>丕</i><i>显</i><i>，</i><i>办</i><i>事</i><i>处</i><i>主</i><i>任</i><i>为</i><i>曹</i><i>荻</i><i>秋</i><i>，</i><br><i>华</i><i>中</i><i>指</i><i>挥</i><i>部</i><i>指</i><i>挥</i><i>为</i><i>管</i><i>文</i><i>蔚</i><i>，</i><i>由</i><i>他</i><i>们</i><i>具</i><i>体</i><i>领</i><i>导</i><i>华</i><i>中</i><i>的</i><br><i>敌</i><i>后</i><i>斗</i><i>争</i><i>。</i></div>
<div style="position:absolute;top:100.7px">1948<i>年</i>3<i>月</i><i>华</i><i>野</i>2<i>、</i>11<i>、</i>12<i>纵</i><i>组</i><i>成</i><i>苏</i><i>北</i><i>兵</i><i>团</i><i>，</i><i>韦</i><i>国</i><i>清</i><br><i>任</i><i>兵</i><i>团</i><i>司</i><i>令</i><i>，</i><i>陈</i><i>丕</i><i>显</i><i>任</i><i>政</i><i>委</i><i>。</i></div>
<div style="position:absolute;top:141.6px">1948<i>年</i>8<i>月</i><i>苏</i><i>北</i><i>地</i><i>区</i><i>基</i><i>本</i><i>解</i><i>放</i><i>。</i></div>
<div style="position:absolute;top:165px">1948<i>年</i>11<i>月</i>6<i>日</i><i>至</i>1949<i>年</i>1<i>月</i>10<i>日</i><i>进</i><i>行</i><i>的</i><i>淮</i><i>海</i><i>战</i><i>役</i><i>，</i><br><i>我</i><i>军</i><i>歼</i><i>灭</i><i>国</i><i>民</i><i>党</i><i>军</i><i>徐</i><i>州</i><i>集</i><i>团</i>55.5<i>万</i><i>人</i><i>，</i><i>基</i><i>本</i><i>解</i><i>放</i><i>了</i><br><i>华</i><i>中</i><i>。</i></div>
<div style="position:absolute;top:224.5px">1949<i>年</i>4<i>月</i><i>，</i><i>其</i><i>地</i><i>分</i><i>别</i><i>划</i><i>归</i><i>新</i><i>成</i><i>立</i><i>的</i><i>苏</i><i>北</i><i>行</i><i>署</i><i>区</i><i>和</i><br><i>皖</i><i>北</i><i>行</i><i>署</i><i>区</i><i>。</i></div>
</div>
<!-- photo -->
<div class="a" style="left:514px;top:288px;width:226px;height:169px;background:repeating-linear-gradient(90deg,rgba(255,255,255,.03) 0 1px,transparent 1px 3px),repeating-linear-gradient(0deg,rgba(0,0,0,.035) 0 1px,transparent 1px 2px),radial-gradient(ellipse at 55% 40%,#bf5566 0%,#b54c5d 55%,#a84454 100%)"></div>

<div class="a" style="left:540.4px;top:293px;width:193px;height:119.5px;background:#44443f;box-shadow:inset 0 0 0 5.5px #a9a8a2, inset 0 0 0 8px #6c6c68, inset 0 0 0 13px #b1b0aa, -2px 3px 4px rgba(50,15,25,.55)"></div>
<div class="a" style="left:556.4px;top:310px;width:161.4px;height:87.5px;overflow:hidden;filter:blur(0.6px)"><svg style="left:0;top:0" width="161" height="88"><rect width="161" height="88" fill="#c6c4a4"/><rect x="0" y="0" width="161" height="48" fill="#8e8c6c"/><circle cx="52.1" cy="6.9" r="4.6" fill="#6e6c52" opacity=".75"/><circle cx="132.2" cy="4.3" r="4.3" fill="#5e5c46" opacity=".75"/><circle cx="34.6" cy="4.0" r="3.7" fill="#b4b294" opacity=".75"/><circle cx="14.6" cy="19.5" r="5.3" fill="#6e6c52" opacity=".75"/><circle cx="152.5" cy="29.0" r="4.3" fill="#6e6c52" opacity=".75"/><circle cx="92.9" cy="18.2" r="5.9" fill="#6e6c52" opacity=".75"/><circle cx="89.6" cy="6.1" r="3.7" fill="#5e5c46" opacity=".75"/><circle cx="19.0" cy="14.2" r="5.3" fill="#b4b294" opacity=".75"/><circle cx="16.6" cy="26.3" r="2.8" fill="#6e6c52" opacity=".75"/><circle cx="88.2" cy="2.9" r="2.2" fill="#b4b294" opacity=".75"/><circle cx="79.9" cy="24.5" r="5.1" fill="#cfcdb0" opacity=".75"/><circle cx="94.3" cy="20.8" r="3.2" fill="#b4b294" opacity=".75"/><circle cx="112.5" cy="11.2" r="4.3" fill="#5e5c46" opacity=".75"/><circle cx="79.7" cy="15.8" r="3.8" fill="#5e5c46" opacity=".75"/><circle cx="157.8" cy="5.4" r="3.7" fill="#7e7c60" opacity=".75"/><circle cx="24.5" cy="22.5" r="2.2" fill="#a4a284" opacity=".75"/><circle cx="12.5" cy="25.7" r="5.2" fill="#7e7c60" opacity=".75"/><circle cx="54.8" cy="16.1" r="4.0" fill="#cfcdb0" opacity=".75"/><circle cx="11.1" cy="4.3" r="3.1" fill="#a4a284" opacity=".75"/><circle cx="106.9" cy="2.8" r="4.8" fill="#a4a284" opacity=".75"/><circle cx="93.0" cy="31.3" r="3.8" fill="#a4a284" opacity=".75"/><circle cx="62.1" cy="30.8" r="2.1" fill="#cfcdb0" opacity=".75"/><circle cx="57.2" cy="28.1" r="4.0" fill="#b4b294" opacity=".75"/><circle cx="123.7" cy="5.9" r="3.0" fill="#cfcdb0" opacity=".75"/><circle cx="147.6" cy="22.8" r="2.7" fill="#cfcdb0" opacity=".75"/><circle cx="88.5" cy="40.6" r="5.3" fill="#5e5c46" opacity=".75"/><circle cx="44.8" cy="19.1" r="3.4" fill="#cfcdb0" opacity=".75"/><circle cx="154.2" cy="6.9" r="2.7" fill="#b4b294" opacity=".75"/><circle cx="106.0" cy="0.6" r="5.3" fill="#b4b294" opacity=".75"/><circle cx="42.3" cy="0.2" r="3.7" fill="#7e7c60" opacity=".75"/><circle cx="98.2" cy="14.7" r="2.5" fill="#5e5c46" opacity=".75"/><circle cx="153.0" cy="30.1" r="5.0" fill="#cfcdb0" opacity=".75"/><circle cx="144.8" cy="35.9" r="5.5" fill="#5e5c46" opacity=".75"/><circle cx="63.2" cy="18.4" r="2.4" fill="#a4a284" opacity=".75"/><circle cx="64.5" cy="8.8" r="5.9" fill="#cfcdb0" opacity=".75"/><circle cx="26.1" cy="15.6" r="2.2" fill="#6e6c52" opacity=".75"/><circle cx="91.3" cy="24.7" r="5.8" fill="#5e5c46" opacity=".75"/><circle cx="4.1" cy="40.2" r="4.5" fill="#b4b294" opacity=".75"/><circle cx="102.1" cy="44.0" r="4.4" fill="#cfcdb0" opacity=".75"/><circle cx="19.8" cy="39.1" r="6.0" fill="#cfcdb0" opacity=".75"/><circle cx="77.3" cy="14.3" r="2.6" fill="#a4a284" opacity=".75"/><circle cx="55.2" cy="12.2" r="5.3" fill="#b4b294" opacity=".75"/><circle cx="83.1" cy="9.4" r="5.8" fill="#7e7c60" opacity=".75"/><circle cx="23.6" cy="25.0" r="2.1" fill="#5e5c46" opacity=".75"/><circle cx="48.0" cy="29.6" r="2.4" fill="#7e7c60" opacity=".75"/><circle cx="83.5" cy="41.8" r="3.4" fill="#b4b294" opacity=".75"/><circle cx="85.7" cy="35.8" r="3.3" fill="#b4b294" opacity=".75"/><circle cx="98.7" cy="36.3" r="5.0" fill="#b4b294" opacity=".75"/><circle cx="129.8" cy="37.6" r="5.0" fill="#b4b294" opacity=".75"/><circle cx="32.2" cy="22.7" r="4.9" fill="#6e6c52" opacity=".75"/><circle cx="127.2" cy="21.7" r="2.8" fill="#5e5c46" opacity=".75"/><circle cx="154.0" cy="20.6" r="5.7" fill="#7e7c60" opacity=".75"/><circle cx="153.8" cy="16.8" r="2.9" fill="#b4b294" opacity=".75"/><circle cx="75.7" cy="15.5" r="3.9" fill="#5e5c46" opacity=".75"/><circle cx="135.3" cy="22.1" r="4.6" fill="#a4a284" opacity=".75"/><circle cx="13.6" cy="30.4" r="5.6" fill="#a4a284" opacity=".75"/><circle cx="120.8" cy="22.0" r="2.7" fill="#a4a284" opacity=".75"/><circle cx="53.5" cy="36.8" r="5.9" fill="#cfcdb0" opacity=".75"/><circle cx="74.6" cy="34.2" r="2.3" fill="#b4b294" opacity=".75"/><circle cx="27.4" cy="5.8" r="2.6" fill="#cfcdb0" opacity=".75"/><circle cx="129.8" cy="6.7" r="5.3" fill="#cfcdb0" opacity=".75"/><circle cx="105.8" cy="16.1" r="4.2" fill="#b4b294" opacity=".75"/><circle cx="3.4" cy="36.8" r="4.9" fill="#6e6c52" opacity=".75"/><circle cx="84.8" cy="42.9" r="3.7" fill="#b4b294" opacity=".75"/><circle cx="133.0" cy="9.7" r="3.0" fill="#7e7c60" opacity=".75"/><circle cx="80.7" cy="35.1" r="3.3" fill="#5e5c46" opacity=".75"/><circle cx="67.5" cy="6.0" r="5.6" fill="#7e7c60" opacity=".75"/><circle cx="144.5" cy="30.5" r="5.3" fill="#5e5c46" opacity=".75"/><circle cx="67.7" cy="42.2" r="4.0" fill="#5e5c46" opacity=".75"/><circle cx="24.4" cy="23.5" r="5.5" fill="#b4b294" opacity=".75"/><path d="M0 48H161V88H0Z" fill="#cac8aa"/><rect x="0" y="74" width="161" height="14" fill="#b2b094"/><ellipse cx="21.1" cy="8.4" rx="3.3" ry="3.8" fill="#4e4c3a"/><path d="M16.2 7.9Q20.0 3.4 23.8 7.9Z" fill="#dedcc8"/><ellipse cx="31.6" cy="6.6" rx="3.3" ry="3.8" fill="#4e4c3a"/><path d="M29.2 6.1Q33.0 1.6 36.8 6.1Z" fill="#dedcc8"/><ellipse cx="44.5" cy="8.5" rx="3.3" ry="3.8" fill="#4e4c3a"/><path d="M42.2 8.0Q46.0 3.5 49.8 8.0Z" fill="#dedcc8"/><ellipse cx="60.7" cy="6.2" rx="3.3" ry="3.8" fill="#4e4c3a"/><path d="M56.2 5.7Q60.0 1.2 63.8 5.7Z" fill="#dedcc8"/><ellipse cx="73.9" cy="8.1" rx="3.3" ry="3.8" fill="#4e4c3a"/><path d="M70.2 7.6Q74.0 3.1 77.8 7.6Z" fill="#dedcc8"/><ellipse cx="89.5" cy="9.1" rx="3.3" ry="3.8" fill="#4e4c3a"/><path d="M84.2 8.6Q88.0 4.1 91.8 8.6Z" fill="#dedcc8"/><ellipse cx="99.8" cy="6.2" rx="3.3" ry="3.8" fill="#4e4c3a"/><path d="M97.2 5.7Q101.0 1.2 104.8 5.7Z" fill="#dedcc8"/><ellipse cx="112.4" cy="6.2" rx="3.3" ry="3.8" fill="#4e4c3a"/><path d="M110.2 5.7Q114.0 1.2 117.8 5.7Z" fill="#dedcc8"/><ellipse cx="124.1" cy="7.8" rx="3.3" ry="3.8" fill="#4e4c3a"/><path d="M122.2 7.3Q126.0 2.8 129.8 7.3Z" fill="#dedcc8"/><path d="M9.0 52L9.5 80H12.9L13.4 56L13.9 80H17.3L17.8 52Z" fill="#6e6c56"/><path d="M8.0 19.4Q13.4 16.4 18.8 19.4L19.6 54H7.2Z" fill="#bcbaa0"/><path d="M12.4 18.4L13.4 25.4L14.4 18.4Z" fill="#4a4838" opacity=".6"/><ellipse cx="13.4" cy="13.4" rx="3.3" ry="4" fill="#5a5642"/><path d="M9.6 12.4Q13.4 7.9 17.2 12.4Z" fill="#e2e0cc"/><rect x="8.5" y="79" width="9.8" height="2.5" fill="#3e3c2e"/><path d="M20.0 52L20.5 80H23.7L24.2 56L24.7 80H27.9L28.4 52Z" fill="#6e6c56"/><path d="M19.0 21.7Q24.2 18.7 29.4 21.7L30.2 54H18.2Z" fill="#c8c6aa"/><path d="M23.2 20.7L24.2 27.7L25.2 20.7Z" fill="#4a4838" opacity=".6"/><ellipse cx="24.2" cy="15.7" rx="3.3" ry="4" fill="#5a5642"/><path d="M20.4 14.7Q24.2 10.2 28.0 14.7Z" fill="#e2e0cc"/><rect x="19.5" y="79" width="9.4" height="2.5" fill="#3e3c2e"/><path d="M31.0 52L31.5 80H34.7L35.2 56L35.7 80H38.9L39.4 52Z" fill="#6e6c56"/><path d="M30.0 24.3Q35.2 21.3 40.4 24.3L41.2 54H29.2Z" fill="#6a6852"/><path d="M34.2 23.3L35.2 30.3L36.2 23.3Z" fill="#4a4838" opacity=".6"/><ellipse cx="35.2" cy="18.3" rx="3.3" ry="4" fill="#5a5642"/><path d="M31.4 17.3Q35.2 12.8 39.0 17.3Z" fill="#e2e0cc"/><rect x="30.5" y="79" width="9.4" height="2.5" fill="#3e3c2e"/><path d="M42.0 52L42.5 80H45.8L46.3 56L46.8 80H50.2L50.7 52Z" fill="#4e4c3c"/><path d="M41.0 19.8Q46.3 16.8 51.7 19.8L52.5 54H40.2Z" fill="#c8c6aa"/><path d="M45.3 18.8L46.3 25.8L47.3 18.8Z" fill="#4a4838" opacity=".6"/><ellipse cx="46.3" cy="13.8" rx="3.3" ry="4" fill="#5a5642"/><path d="M42.5 12.8Q46.3 8.3 50.1 12.8Z" fill="#e2e0cc"/><rect x="41.5" y="79" width="9.7" height="2.5" fill="#3e3c2e"/><path d="M54.0 52L54.5 80H57.1L57.6 56L58.1 80H60.6L61.1 52Z" fill="#4e4c3c"/><path d="M53.0 20.4Q57.6 17.4 62.1 20.4L62.9 54H52.2Z" fill="#bcbaa0"/><path d="M56.6 19.4L57.6 26.4L58.6 19.4Z" fill="#4a4838" opacity=".6"/><ellipse cx="57.6" cy="14.4" rx="3.3" ry="4" fill="#5a5642"/><path d="M53.8 13.4Q57.6 8.9 61.4 13.4Z" fill="#e2e0cc"/><rect x="53.5" y="79" width="8.1" height="2.5" fill="#3e3c2e"/><path d="M65.0 52L65.5 80H68.8L69.3 56L69.8 80H73.1L73.6 52Z" fill="#4e4c3c"/><path d="M64.0 24.4Q69.3 21.4 74.6 24.4L75.4 54H63.2Z" fill="#bcbaa0"/><path d="M68.3 23.4L69.3 30.4L70.3 23.4Z" fill="#4a4838" opacity=".6"/><ellipse cx="69.3" cy="18.4" rx="3.3" ry="4" fill="#5a5642"/><path d="M65.5 17.4Q69.3 12.9 73.1 17.4Z" fill="#e2e0cc"/><rect x="64.5" y="79" width="9.6" height="2.5" fill="#3e3c2e"/><path d="M76.0 52L76.5 80H79.1L79.6 56L80.1 80H82.8L83.3 52Z" fill="#5c5a48"/><path d="M75.0 24.3Q79.6 21.3 84.3 24.3L85.1 54H74.2Z" fill="#5a5846"/><path d="M78.6 23.3L79.6 30.3L80.6 23.3Z" fill="#4a4838" opacity=".6"/><ellipse cx="79.6" cy="18.3" rx="3.3" ry="4" fill="#5a5642"/><path d="M75.8 17.3Q79.6 12.8 83.4 17.3Z" fill="#e2e0cc"/><rect x="75.5" y="79" width="8.3" height="2.5" fill="#3e3c2e"/><path d="M87.0 52L87.5 80H90.4L90.9 56L91.4 80H94.3L94.8 52Z" fill="#6e6c56"/><path d="M86.0 21.9Q90.9 18.9 95.8 21.9L96.6 54H85.2Z" fill="#5a5846"/><path d="M89.9 20.9L90.9 27.9L91.9 20.9Z" fill="#4a4838" opacity=".6"/><ellipse cx="90.9" cy="15.9" rx="3.3" ry="4" fill="#5a5642"/><path d="M87.1 14.9Q90.9 10.4 94.7 14.9Z" fill="#e2e0cc"/><rect x="86.5" y="79" width="8.8" height="2.5" fill="#3e3c2e"/><path d="M98.0 52L98.5 80H101.7L102.2 56L102.7 80H105.9L106.4 52Z" fill="#6e6c56"/><path d="M97.0 25.0Q102.2 22.0 107.4 25.0L108.2 54H96.2Z" fill="#c8c6aa"/><path d="M101.2 24.0L102.2 31.0L103.2 24.0Z" fill="#4a4838" opacity=".6"/><ellipse cx="102.2" cy="19.0" rx="3.3" ry="4" fill="#5a5642"/><path d="M98.4 18.0Q102.2 13.5 106.0 18.0Z" fill="#e2e0cc"/><rect x="97.5" y="79" width="9.4" height="2.5" fill="#3e3c2e"/><path d="M109.0 52L109.5 80H112.4L112.9 56L113.4 80H116.2L116.7 52Z" fill="#8a8870"/><path d="M108.0 19.6Q112.9 16.6 117.7 19.6L118.5 54H107.2Z" fill="#c8c6aa"/><path d="M111.9 18.6L112.9 25.6L113.9 18.6Z" fill="#4a4838" opacity=".6"/><ellipse cx="112.9" cy="13.6" rx="3.3" ry="4" fill="#5a5642"/><path d="M109.1 12.6Q112.9 8.1 116.7 12.6Z" fill="#e2e0cc"/><rect x="108.5" y="79" width="8.7" height="2.5" fill="#3e3c2e"/><path d="M120.0 52L120.5 80H123.4L123.9 56L124.4 80H127.4L127.9 52Z" fill="#4e4c3c"/><path d="M119.0 19.1Q123.9 16.1 128.9 19.1L129.7 54H118.2Z" fill="#bcbaa0"/><path d="M122.9 18.1L123.9 25.1L124.9 18.1Z" fill="#4a4838" opacity=".6"/><ellipse cx="123.9" cy="13.1" rx="3.3" ry="4" fill="#5a5642"/><path d="M120.1 12.1Q123.9 7.6 127.7 12.1Z" fill="#e2e0cc"/><rect x="119.5" y="79" width="8.9" height="2.5" fill="#3e3c2e"/><path d="M132.0 52L132.5 80H135.5L136.0 56L136.5 80H139.5L140.0 52Z" fill="#5c5a48"/><path d="M131.0 19.4Q136.0 16.4 141.0 19.4L141.8 54H130.2Z" fill="#5a5846"/><path d="M135.0 18.4L136.0 25.4L137.0 18.4Z" fill="#4a4838" opacity=".6"/><ellipse cx="136.0" cy="13.4" rx="3.3" ry="4" fill="#5a5642"/><path d="M132.2 12.4Q136.0 7.9 139.8 12.4Z" fill="#e2e0cc"/><rect x="131.5" y="79" width="9.0" height="2.5" fill="#3e3c2e"/><path d="M143 22Q149 18 155 22L157 80H141Z" fill="#3c3a2e"/><ellipse cx="149" cy="16" rx="3.5" ry="4.2" fill="#3c3a2e"/><path d="M64 26H74V50H64Z" fill="#7a7862"/><path d="M65.5 27V50M68.5 27V50M71.5 27V50" stroke="#e2e0cc" stroke-width="1.2"/><rect x="0" y="0" width="161" height="2.5" fill="#35352c"/><rect x="0" y="0" width="2" height="88" fill="#e6e6da" opacity=".5"/></svg></div>
<div class="a" style="left:588px;top:424.7px;width:93.4px;height:32.3px;background:linear-gradient(#828280,#747472);box-shadow:-3px 2px 3px rgba(40,10,20,.55)"></div>
<div class="a" style="left:600px;top:438.5px;width:68px;height:1.5px;background:repeating-linear-gradient(90deg,#2a2a2a 0 2px,transparent 2px 2.6px);opacity:.75"></div>
<div class="a" style="left:590.5px;top:436.5px;width:5px;height:5px;border-radius:50%;background:#3a3a3a;border:1px solid #aaa"></div>
<div class="a" style="left:673.5px;top:436.5px;width:5px;height:5px;border-radius:50%;background:#3a3a3a;border:1px solid #aaa"></div>

<!-- status bar -->
<div class="a" style="left:0;top:617px;width:1082px;height:27px;background:#f1f1f1;border-top:1px solid #e0e0e0"></div>
<div class="t" style="left:8px;top:626.5px;font-size:10px;color:#777"><i>幻</i><i>灯</i><i>片</i> 6 / 7</div>
<div class="sep" style="left:70px;top:622px;height:18px"></div>
<div class="t" style="left:79px;top:626.5px;font-size:9.5px;color:#777">1_<i>空</i><i>白</i><i>设</i><i>计</i><i>模</i><i>板</i></div>
<div class="sep" style="left:154px;top:622px;height:18px"></div>


<div class="a" style="left:0;top:644px;width:1082px;height:30px;background:#000"></div>
<!-- scrollbars -->
<svg style="left:0;top:0" width="1" height="1"><g fill="#777">
<path d="M785 186L787.5 183L790 186Z"/><path d="M785 541L787.5 544L790 541Z"/>
<path d="M785.5 556L787.5 554L789.5 556ZM785.5 558.5L787.5 556.5L789.5 558.5Z"/>
<path d="M785.5 569.5L787.5 571.5L789.5 569.5ZM785.5 572L787.5 574L789.5 572Z"/>
<path d="M155.5 586.5L152.5 584V589Z" /><path d="M772 584V589L775 586.5Z"/>
</g></svg>
<div class="a" style="left:783px;top:440px;width:9.5px;height:45px;background:#f8f8f8;border:1px solid #c8c8c8;border-radius:5px"></div>
<div class="a" style="left:162.5px;top:581.5px;width:589.5px;height:11px;background:#f6f6f6;border:1px solid #d0d0d0;border-radius:6px"></div>
<div class="t" style="left:161px;top:597.5px;font-size:10.5px;color:#555">“<i>坚</i><i>持</i><i>敌</i><i>后</i> <i>解</i><i>放</i><i>华</i><i>中</i>”</div>

<!-- properties panel -->
<div class="t" style="left:801px;top:180px;font-size:10px;color:#333"><i>对</i><i>象</i><i>属</i><i>性</i></div><div class="ar" style="left:842px;top:184px"></div>
<svg style="left:0;top:0" width="1" height="1"><g fill="none" stroke="#888" stroke-width="1.1">
<rect x="1013" y="183.5" width="9" height="6" rx="0.5"/><path d="M1014.8 183.5V181.5A2.7 2.7 0 0 1 1020.2 181.5V183.5"/>
<path d="M1032.5 180L1040.5 188M1040.5 180L1032.5 188"/>
</g>
<g fill="none" stroke="#333" stroke-width="1.1"><path d="M806.5 206.5L813 200L819.5 206.5L813 213Z M809.5 203.5L807 200.5L810 198.5"/></g>
<path d="M821.5 205V213.5" stroke="#5c9ce6" stroke-width="1.6"/>
</svg>
<div class="t" style="left:805px;top:220.5px;font-size:10.5px;color:#e06a30"><i>填</i><i>充</i></div>
<div class="a" style="left:802px;top:234.5px;width:238px;height:1px;background:#dddddd"></div>
<div class="a" style="left:802px;top:234px;width:25px;height:2px;background:#e0743c"></div>
<svg style="left:0;top:0" width="1" height="1"><path d="M804 262.5H810V256.5Z" fill="#e06a30"/></svg>
<div class="t" style="left:814.5px;top:254.5px;font-size:10.5px;color:#e06a30"><i>填</i><i>充</i></div>
<div class="a" style="left:946px;top:250px;width:86.5px;height:19.5px;background:#fff;border:1px solid #d2d2d2;border-radius:2px"></div>
<div class="ar" style="left:1024px;top:259px;border-top-color:#555"></div>
<div class="a" style="left:813.5px;top:281px;width:10.5px;height:10.5px;border-radius:50%;border:1px solid #aaa;background:#fff"></div>
<div class="a" style="left:816.5px;top:284px;width:4.5px;height:4.5px;border-radius:50%;background:#e0743c"></div>
<div class="a" style="left:813.5px;top:300.5px;width:10.5px;height:10.5px;border-radius:50%;border:1px solid #aaa;background:#fff"></div>
<div class="a" style="left:813.5px;top:320px;width:10.5px;height:10.5px;border-radius:50%;border:1px solid #aaa;background:#fff"></div>
<div class="a" style="left:813.5px;top:340.5px;width:10.5px;height:10.5px;border-radius:50%;border:1px solid #aaa;background:#fff"></div>
<div class="a" style="left:813.5px;top:360.5px;width:10.5px;height:10.5px;border:1px solid #aaa;background:#fff"></div>
<div class="t" style="left:828px;top:281.5px;font-size:10px;color:#444"><i>纯</i><i>色</i><i>填</i><i>充</i>(<u>S</u>)</div>
<div class="t" style="left:828px;top:301px;font-size:10px;color:#444"><i>渐</i><i>变</i><i>填</i><i>充</i>(<u>G</u>)</div>
<div class="t" style="left:828px;top:320.5px;font-size:10px;color:#444"><i>图</i><i>片</i><i>或</i><i>纹</i><i>理</i><i>填</i><i>充</i>(<u>P</u>)</div>
<div class="t" style="left:828px;top:341px;font-size:10px;color:#444"><i>图</i><i>案</i><i>填</i><i>充</i>(<u>A</u>)</div>
<div class="t" style="left:828px;top:361px;font-size:10px;color:#444"><i>隐</i><i>藏</i><i>背</i><i>景</i><i>图</i><i>形</i>(<u>H</u>)</div>
<div class="t" style="left:812px;top:403px;font-size:10px;color:#444"><i>颜</i><i>色</i>(C)</div>
<div class="a" style="left:947px;top:399.5px;width:85px;height:17px;background:#fff;border:1px solid #d2d2d2;border-radius:2px"></div>
<div class="ar" style="left:1024px;top:407px;border-top-color:#555"></div>
<div class="t" style="left:812px;top:431.5px;font-size:10px;color:#444"><i>透</i><i>明</i><i>度</i>(T)</div>
<div class="a" style="left:940px;top:436px;width:78px;height:1px;background:#c4c4c4"></div>
<svg style="left:0;top:0" width="1" height="1"><g fill="#fff" stroke="#999" stroke-width="0.9"><circle cx="930.3" cy="436.3" r="5.2"/><circle cx="1026.8" cy="436.3" r="5.2"/></g>
<path d="M927.5 436.3H933M1024 436.3H1029.5M1026.8 433.5V439" stroke="#777" stroke-width="1"/>
<path d="M937 441.5L940.5 436.5L944 441.5Z" fill="#e0743c"/></svg>
<div class="t" style="left:938px;top:425.5px;font-size:9px;color:#555">0%</div>
<div class="a" style="left:1050px;top:582.5px;width:30px;height:1px;background:#dadada"></div>
<div class="a" style="left:802.5px;top:588px;width:44.5px;height:20.5px;background:#fff;border:1px solid #cfcfcf"></div>
<div class="t" style="left:805.5px;top:593.5px;font-size:10px;color:#333"><i>全</i><i>部</i><i>应</i><i>用</i></div>
<div class="a" style="left:853px;top:588px;width:45.5px;height:20.5px;background:#ececec;border:1px solid #d8d8d8"></div>
<div class="t" style="left:856px;top:593.5px;font-size:10px;color:#bbb"><i>重</i><i>置</i><i>背</i><i>景</i></div>
<svg style="left:0;top:0" width="1" height="1"><circle cx="909.3" cy="599.5" r="5.2" fill="none" stroke="#999" stroke-width="0.9"/><path d="M907.8 596.8L911.8 599.5L907.8 602.2Z" fill="none" stroke="#e0743c" stroke-width="1"/></svg>
<div class="t" style="left:919.5px;top:594.5px;font-size:10px;color:#3b7fd8"><i>操</i><i>作</i><i>技</i><i>巧</i></div>
<!-- sidebar -->

<div class="a" style="left:1058px;top:182px;width:14px;height:1px;background:#aaa"></div><div class="a" style="left:1058px;top:185px;width:14px;height:1px;background:#aaa"></div>
<div class="a" style="left:1052px;top:194.5px;width:26px;height:25px;background:#d2d2d2;border-radius:3px"></div>
<svg style="left:0;top:0" width="1" height="1"><g fill="none" stroke="#444" stroke-width="1">
<path d="M1059 202H1071M1059 207H1071M1059 212H1071"/><circle cx="1063" cy="202" r="1.5" fill="#d2d2d2"/><circle cx="1068" cy="207" r="1.5" fill="#d2d2d2"/><circle cx="1062" cy="212" r="1.5" fill="#d2d2d2"/>
<path d="M1065 229L1067 233L1071 233.5L1068 236.5L1069 240.5L1065 238.5L1061 240.5L1062 236.5L1059 233.5L1063 233Z" stroke="#666"/>
<rect x="1059.5" y="257" width="9" height="7" rx="1" stroke="#555"/><rect x="1062.5" y="261" width="9" height="7" rx="1" stroke="#555" fill="#ebebeb"/>
<path d="M1065 288L1070.5 291V297L1065 300L1059.5 297V291Z M1059.5 291L1065 294L1070.5 291M1065 294V300" stroke="#bbb"/>
<path d="M1059.5 597.5H1064V602H1059.5Z M1066 597.5H1070.5V602H1066Z M1059.5 603.5H1064V608H1059.5Z M1066 603.5H1070.5V608H1066Z" stroke="#555"/>
</g></svg>
<div class="a" style="left:1067px;top:338px;width:15px;height:36.5px;background:#5a5a5a;border-radius:4px 0 0 4px"></div>
<svg style="left:0;top:0" width="1" height="1"><path d="M1073 352L1076.5 356L1073 360" fill="none" stroke="#ddd" stroke-width="1.2"/></svg>

<!-- status bar items -->
<div class="a" style="left:746px;top:621.3px;width:18.4px;height:18.7px;background:#d0d0d0;border-radius:2px;z-index:-0"></div>
<div class="a" style="left:819px;top:621.3px;width:25px;height:18.7px;background:#f06c47;border-radius:2px"></div>
<svg style="left:0;top:0" width="1" height="1"><g fill="none" stroke="#555" stroke-width="1.1">
<path d="M723 627H734M723 630H734M723 633H731"/><path d="M731 634.5L733 636.5L735 634.5" fill="#555"/>
<rect x="750.5" y="625" width="11" height="11" rx="1"/><path d="M754 625V636M754 632H761.5"/>
<path d="M770.5 625.5H775.5V630.5H770.5Z M778 625.5H783V630.5H778Z M770.5 632H775.5V637H770.5Z M778 632H783V637H778Z"/>
<path d="M791.5 625.5H797V637H791.5Z M797 625.5H802.5V637H797Z"/>
<path d="M903.5 631H913.5" stroke-width="1.5"/><path d="M1039 631H1049M1044 626V636" stroke-width="1.4"/>
<path d="M1059.5 628V626H1062M1068 626H1070.5V628M1070.5 634V636H1068M1062 636H1059.5V634" stroke="#888"/>
</g><circle cx="1065" cy="631" r="1" fill="#888"/>
<path d="M830 626V636L838.5 631Z" fill="#fff"/></svg>

<div class="ar" style="left:739px;top:630px"></div>

<div class="ar" style="left:848px;top:630px"></div>
<div class="t" style="left:867px;top:626px;font-size:10.5px;color:#555">59%</div><div class="ar" style="left:889.5px;top:630px"></div>
<div class="a" style="left:922px;top:630.5px;width:109px;height:1px;background:#c8c8c8"></div>
<div class="a" style="left:922px;top:630px;width:25px;height:1.5px;background:#777"></div>
<div class="a" style="left:975px;top:628.5px;width:1px;height:4px;background:#c8c8c8"></div>
<div class="a" style="left:946px;top:625.5px;width:11px;height:11px;border-radius:50%;background:#fff;border:1.2px solid #666"></div>

<!-- bottom bar icons -->
<svg style="left:0;top:0" width="1" height="1">
<rect x="2" y="657.5" width="12" height="9" rx="1" fill="#fff"/><path d="M5 669.5H11" stroke="#fff" stroke-width="1.3"/><path d="M5 664.5Q6 660.5 10 660.5M8.5 659L10.5 660.5L8.5 662" fill="none" stroke="#000" stroke-width="1.1"/>
<rect x="19.5" y="656" width="5" height="9" rx="2.5" fill="#fff"/><path d="M18 662.5A4 4 0 0 0 26 662.5M22 666.5V670" fill="none" stroke="#fff" stroke-width="1.2"/>
</svg>
<!-- IME -->
<div class="a" style="left:1069.7px;top:655.2px;width:189.3px;height:19px;background:#fff"></div>
<div class="a" style="left:1049px;top:653.5px;width:22px;height:22px;background:#f05a22;border-radius:4px;transform:rotate(-12deg)"></div>
<div class="t" style="left:1052px;top:653px;font-size:19px;font-weight:bold;color:#fff;font-style:italic">S</div>
<svg style="left:0;top:0" width="1" height="1"><g fill="none" stroke="#1e73d6" stroke-width="2.2"><rect x="1080" y="661" width="11" height="7"/><path d="M1085.5 657V673.5"/></g></svg>
<svg style="left:0;top:0" width="1" height="1"><g fill="none" stroke="#1e73d6" stroke-width="1.5">
<circle cx="1101" cy="661" r="1.7"/><path d="M1108.5 662.5V666L1106.5 669"/>
<circle cx="1125.7" cy="664.5" r="7"/><path d="M1122 666.5Q1125.7 670 1129.5 666.5"/><path d="M1123 661.5V663M1128.5 661.5V663"/>
<path d="M1140 664L1142.5 660L1145 664M1148 664L1150.5 660L1153 664M1143 668.5H1150"/>
<rect x="1164.5" y="656" width="6" height="10" rx="3" fill="#1e73d6"/><path d="M1162 664A5.5 5.5 0 0 0 1173 664M1167.5 669.5V673M1164 673H1171"/>
<rect x="1180.5" y="659.5" width="14" height="10" rx="1.5"/><path d="M1183 662.5H1192M1183 665H1192M1185 667.5H1190" stroke-width="1" stroke-dasharray="1.3 0.8"/>
</g>
<g fill="#c9cfd6"><circle cx="1208" cy="660" r="3.3"/><path d="M1202 673V668A5 5 0 0 1 1213 668V673Z"/><rect x="1209" y="666" width="8" height="6" fill="#b0b8c2"/></g>
<path d="M1221.5 661.5L1225.5 658H1231L1235 661.5L1233 664H1231.5V673H1225V664H1223.5Z" fill="#1e73d6"/>
<g fill="#1e73d6"><rect x="1241.5" y="658" width="6" height="6"/><rect x="1249" y="658" width="5.5" height="6" fill="none" stroke="#1e73d6" stroke-width="1.3"/><rect x="1241.5" y="665.5" width="6" height="7"/><rect x="1249" y="665.5" width="5.5" height="7"/></g>
</svg>

<!-- bottom bar -->

<div class="t" style="left:31px;top:657px;font-size:14.5px;color:#fff"><i>刘</i><i>瑞</i><i>睿</i><i>的</i><i>屏</i><i>幕</i><i>共</i><i>享</i></div>
<script>(function(){var t=document.createElement("span");t.style.cssText='position:absolute;left:-9999px;top:0;white-space:nowrap;font:100px "Liberation Sans",sans-serif';t.textContent="\u4e2d\u4e2d\u4e2d\u4e2d";document.body.appendChild(t);if(t.getBoundingClientRect().width<360)document.documentElement.className+=" nf";t.parentNode.removeChild(t);})();</script>
</body></html>
